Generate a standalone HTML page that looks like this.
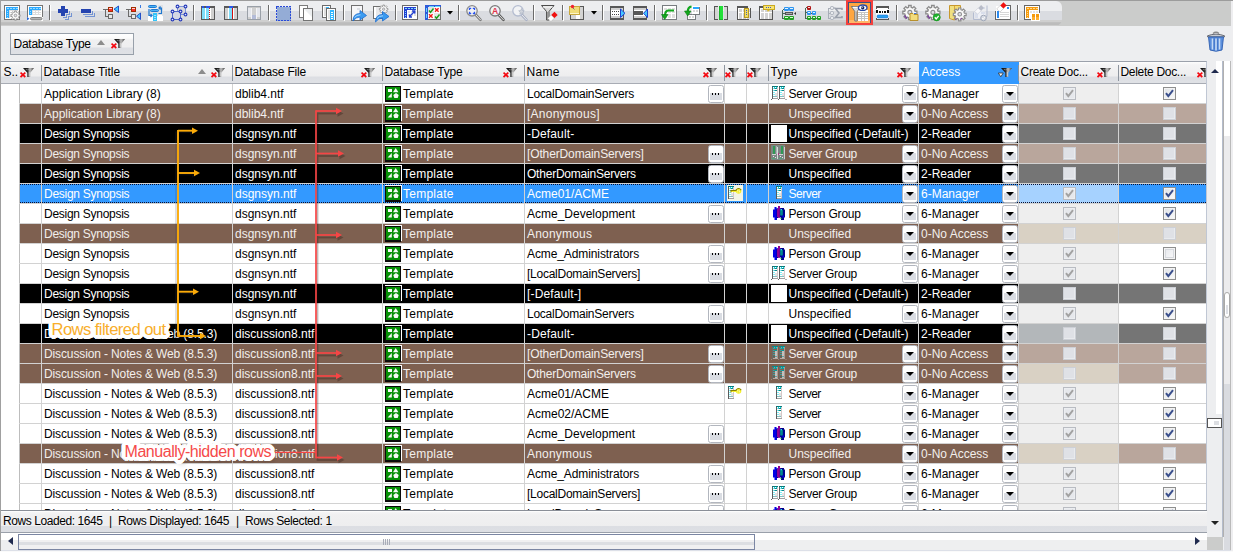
<!DOCTYPE html>
<html lang="en"><head><meta charset="utf-8"><title>ACL grid</title>
<style>
html,body{margin:0;padding:0}
body{width:1233px;height:552px;overflow:hidden;position:relative;background:#edeef0;font-family:"Liberation Sans",sans-serif;font-size:12px;color:#000}
div,span,svg,i,b{position:absolute;box-sizing:border-box;display:block}
.topline{left:0;top:0;width:1233px;height:1px;background:#9c9c9c}
.leftline{left:0;top:0;width:1px;height:552px;background:#a0a0a0}
.tbbg{left:1px;top:1px;width:1230px;height:25px;background:#cbcccb}
.tb{left:1px;top:1px;width:1061px;height:25px;border-radius:0 6px 7px 0;background:linear-gradient(#edeef0 0,#edeef0 10px,#dadce1 10px,#dadce1 19px,#cfcfcf 19px,#cfcfcf 21px,#c4c4c4 21px,#bcbcbc 22px,#bcbcbc 24px,#cdcdcd 24px,#cdcdcd 25px)}
.tb .sep{top:4px;width:2px;height:16px;border-left:1px solid #6d6d6d;border-right:1px solid #fff}
.tb svg{top:4px;width:16px;height:16px}
.tb .arr{top:11px;width:0;height:0;border:3px solid transparent;border-top:3px solid #000;border-bottom:0}
.tb .hot{left:845px;top:0;width:27px;height:24px;border:2px solid #e8413c;background:#f5a54a}
.grp{left:10px;top:33px;width:124px;height:22px;border:1px solid #98a0aa;background:linear-gradient(#fff 0,#fbfbfb 4px,#f0f0f1 6px,#efeff0 13px,#dddfe4 14px,#dfe1e5 100%)}
.grp .gt{left:2.500px;top:1px;line-height:19px;white-space:nowrap;letter-spacing:-.25px}
.sortup{left:86px;top:6px;width:0;height:0;border:4.5px solid transparent;border-bottom:5px solid #8c8c8c;border-top:0}
.flt{width:14px;height:10px}
.trash{left:1207px;top:31px}
.grid{left:1px;top:61px;width:1206px;height:450px;overflow:hidden;background:#fff;border-top:1px solid #9ba1ab;border-right:1px solid #c0c7d4}
.grid>*{margin-left:-1px}
.hdr{left:0;top:0;width:1207px;height:22px;background:linear-gradient(#fdfdfd 0,#f3f3f4 3px,#eeeeef 14px,#dcdee3 15px,#dfe1e5 20px);border-bottom:1px solid #a8acb4}
.hc{top:0;height:21px}
.hc:before{content:"";position:absolute;left:0;top:3px;width:1px;height:16px;background:#8d949e}
.hc:first-child:before{display:none}
.hc .ht{top:0;line-height:20px;white-space:nowrap;margin-left:-.5px}
.hsel{background:#3399ff;color:#fff;height:23px;top:-1px;left:919px !important;width:100px !important}
.hsel .ht{top:1px !important}
.hsel .flt{margin-top:1px}
.hsel:before{display:none}
.row{left:0;width:1207px;height:20px;border-bottom:1px solid #d2d2d2}
.row:before{content:"";position:absolute;left:1px;top:0;width:18px;height:20px;background:#fff}
.c{top:0;height:19px;border-left:1px solid #d2d2d2;overflow:hidden;white-space:nowrap}
.c .t{left:2px;top:1px;line-height:19px}
.rw{background:#fff}
.rb{background:#7e6050;color:#f3efec}
.rk{background:#000;color:#fff}
.rs{background:#3399ff;color:#fff}
.ic{top:1px}
.wb{left:3px;top:1px;width:16px;height:17px;background:#fff}
.btn{top:1px;right:0;width:16px;height:18px;border:1px solid #b2b6be;border-radius:2.500px;background:linear-gradient(#fff 0,#fff 7px,#d9dce2 7px,#d9dce2 14px,#fff 14px);box-shadow:inset 0 0 0 1px #fff}
.dd b{left:3px;top:6px;width:0;height:0;border:4px solid transparent;border-top:4px solid #000;border-bottom:0}
.el i{top:7px;width:1px;height:1.500px;background:#000}
.el i:nth-child(1){left:3px}.el i:nth-child(2){left:6px}.el i:nth-child(3){left:9px}
.cb{width:13px;height:13px;border:1px solid #8e8f8f;background:#fff}
.cb svg{left:0;top:0}
.cbc{background:linear-gradient(135deg,#dfe2e6,#fafbfb);box-shadow:inset 0 0 0 1px #f4f4f4}
.cbd{border-color:#b9bcc2;background:#e6e8ec;box-shadow:inset 0 0 0 1px #eceef1}
.cbu{border-color:#cdd0d6;background:#dfe1e6;box-shadow:inset -1px -1px 0 0 #e9ebee}
.cbw{border-color:#8e8f8f;background:linear-gradient(135deg,#e4e6ea,#fbfbfc);box-shadow:inset 0 0 0 1px #f4f4f4,inset 0 0 0 2px #d6d9de}
.status{left:1px;top:511px;width:1206px;height:22px;background:linear-gradient(#f5f5f6 0,#f0f0f1 3px,#eeeeef 14px,#dcdee3 14px,#dddfe4 20px);border-top:1px solid #fcfcfc;border-bottom:1px solid #9aa0aa}
.status span{top:0;line-height:19px;white-space:nowrap;letter-spacing:-.42px}
.hs{left:1px;top:533px;width:1206px;height:17px;background:linear-gradient(#fff 0,#fff 7px,#eeeff0 7px)}
.lbl{white-space:nowrap;line-height:19px}
.lblsh{white-space:nowrap;line-height:19px;color:transparent;text-shadow:2px 2.500px 5px rgba(0,0,0,.45),0 0 7px rgba(0,0,0,.25)}
.rs .c:after,.rs .foc{content:"";position:absolute;left:0;right:0;top:0;height:1px;background:repeating-linear-gradient(90deg,#0a1030 0,#0a1030 1px,transparent 1px,transparent 2px)}
.rs .c:before{content:"";position:absolute;left:0;right:0;bottom:0;height:1px;background:repeating-linear-gradient(90deg,#0a1030 0,#0a1030 1px,transparent 1px,transparent 2px)}
.vs{left:1207px;top:61px;width:17px;height:476px;background:linear-gradient(90deg,#edeef0 0,#edeef0 15px,#b4bccc 15px,#b4bccc 16px,#b0b0b0 16px)}
.vs .ws{left:9px;top:0;width:6px;height:353px;background:#fff}
.vs .up{left:3.500px;top:7.500px;width:0;height:0;border:4px solid transparent;border-bottom:4.500px solid #1f2a4e;border-top:0}
.vs .dn{left:3.500px;top:460px;width:0;height:0;border:4px solid transparent;border-top:4.500px solid #222;border-bottom:0}
.vs .th{left:0;top:357px;width:15px;height:10px;border:1px solid #555;background:#fff}
.vs .th i{left:6px;top:2px;width:5px;height:4px;background:#dcdee2}
.corner{left:1207px;top:537px;width:16px;height:13px;background:#cbcccb}
.os{left:1224px;top:61px;width:7px;height:489px;background:linear-gradient(#fff 0,#fff 75px,#ebebed 75px,#ebebed 323px,#d9dbe0 323px);border-right:1px solid #bababa}
.os .th{left:0;top:231px;width:6px;height:26px;border:1px solid #a8a8a8;border-radius:3px;background:#fff}
.os .th i{left:1px;top:12px;width:2px;height:9px;background:#dcdee4}
.redge{left:1231px;top:1px;width:2px;height:551px;background:#eeeef0}
.botline{left:1px;top:550px;width:1230px;height:1px;background:#dde0e8}
.botline2{left:0;top:551px;width:1233px;height:1px;background:#fafafa}
.hs .la{left:7px;top:4px;width:0;height:0;border:4.5px solid transparent;border-right:5px solid #1f2a4e;border-left:0}
.hs .ra{left:1194px;top:4px;width:0;height:0;border:4.5px solid transparent;border-left:5px solid #1f2a4e;border-right:0}
.hs .th{left:17px;top:1px;width:737px;height:16px;border:1px solid #7b86a3;background:linear-gradient(#fff 0,#fff 5px,#f0f0f1 5px,#f0f0f1 7px,#dcdee2 7px,#dcdee2 10px,#f0f0f1 10px)}
.hs .th i{top:4px;width:1px;height:6px;background:#a8acb8}
.gridbot{left:1px;top:510px;width:1206px;height:1px;background:#8a8f98}
.kbg{left:2px;top:1px;width:16px;height:16px;background:#f3f5e6}
.wb{left:2px !important}
.c0{border-left-color:#bdbdbd}
</style></head>
<body>
<svg width="0" height="0" style="position:absolute"><defs><linearGradient id="fg" x1="0" y1="0" x2="1" y2="0"><stop offset="0" stop-color="#0c0c0c"/><stop offset=".42" stop-color="#2a2a2a"/><stop offset=".62" stop-color="#c4c4c4"/><stop offset=".8" stop-color="#8a8a8a"/><stop offset="1" stop-color="#3c3c3c"/></linearGradient>
<symbol id="flt" viewBox="0 0 14 10"><path d="M0.500 4.600 L5.300 9 M5.300 4.600 L0.500 9" stroke="#f40810" stroke-width="1.700" fill="none"/><path d="M3 0 L14 0 L10.300 4.800 L10.300 9 L7.300 9 L7.300 4.800 Z" fill="url(#fg)"/><path d="M6.200 1.300 L7 2.200 M7.600 1 L8.300 1.800" stroke="#fff" stroke-width=".700" opacity=".8"/><path d="M9.300 4 L9.300 8" stroke="#e8e8e8" stroke-width=".800" opacity=".7"/></symbol>
<symbol id="flta" viewBox="0 0 14 10"><path d="M0.300 5 L5.300 5 L2.800 8.800 Z" fill="#f4f7fb" stroke="#333" stroke-width=".800"/><path d="M3 0 L14 0 L10.300 4.800 L10.300 9 L7.300 9 L7.300 4.800 Z" fill="url(#fg)"/><path d="M6.200 1.300 L7 2.200 M7.600 1 L8.300 1.800" stroke="#fff" stroke-width=".700" opacity=".8"/><path d="M9.300 4 L9.300 8" stroke="#e8e8e8" stroke-width=".800" opacity=".7"/></symbol>
<symbol id="tpl" viewBox="0 0 17 17"><g shape-rendering="crispEdges"><rect x="0" y="0" width="17" height="1" fill="#fff"/><rect x="16" y="0" width="1" height="16" fill="#fff"/><rect x="0" y="1" width="16" height="16" fill="#0a0a0a"/><rect x="1" y="2" width="14" height="13" fill="#069006"/><rect x="3" y="4" width="4" height="3" fill="#f6faf6"/></g><path d="M2.600 12.600 L6.800 8 L6.800 12.600Z" fill="#f6faf6"/><path d="M8 7.200 L10.700 3 L13.400 7.200Z" fill="#f6faf6"/><path d="M11 8.100 L13.700 10 L12.700 13 L9.300 13 L8.300 10Z" fill="#f6faf6"/></symbol>
<symbol id="sg" viewBox="0 0 16 16"><rect x="1" y="1" width="6" height="13" fill="#fff"/><rect x="1" y="1" width="1" height="13" fill="#5c5c5c"/><rect x="1" y="1" width="6" height="1" fill="#0a7878"/><rect x="6" y="2" width="1" height="11" fill="#d4c8c8"/><rect x="2" y="13" width="5" height="1" fill="#a0a0a0"/><rect x="2.5" y="3" width="1" height="1" fill="#00e0ee"/><rect x="2.5" y="5" width="1" height="1" fill="#00e0ee"/><rect x="2.5" y="7" width="1" height="1" fill="#00e0ee"/><rect x="2.5" y="9" width="1" height="1" fill="#00e0ee"/><rect x="3.5" y="3" width="2.5" height="1" fill="#0a8a8a"/><rect x="3.5" y="5" width="2.5" height="1" fill="#0a8a8a"/><rect x="3" y="2" width="1" height="1" fill="#00e0ee"/><rect x="5" y="2" width="1" height="1" fill="#00e0ee"/><rect x="2.5" y="11" width="1" height="1" fill="#0a8080"/><rect x="4.5" y="11" width="1" height="1" fill="#0a8080"/><rect x="4.5" y="8" width="1" height="3" fill="#c8c8c8"/><rect x="0" y="14" width="1" height="1" fill="#666"/><rect x="8" y="1" width="6" height="13" fill="#fff"/><rect x="8" y="1" width="1" height="13" fill="#5c5c5c"/><rect x="8" y="1" width="6" height="1" fill="#0a7878"/><rect x="13" y="2" width="1" height="11" fill="#d4c8c8"/><rect x="9" y="13" width="5" height="1" fill="#a0a0a0"/><rect x="9.5" y="3" width="1" height="1" fill="#00e0ee"/><rect x="9.5" y="5" width="1" height="1" fill="#00e0ee"/><rect x="9.5" y="7" width="1" height="1" fill="#00e0ee"/><rect x="9.5" y="9" width="1" height="1" fill="#00e0ee"/><rect x="10.5" y="3" width="2.5" height="1" fill="#0a8a8a"/><rect x="10.5" y="5" width="2.5" height="1" fill="#0a8a8a"/><rect x="10" y="2" width="1" height="1" fill="#00e0ee"/><rect x="12" y="2" width="1" height="1" fill="#00e0ee"/><rect x="9.5" y="11" width="1" height="1" fill="#0a8080"/><rect x="11.5" y="11" width="1" height="1" fill="#0a8080"/><rect x="11.5" y="8" width="1" height="3" fill="#c8c8c8"/><rect x="7" y="14" width="1" height="1" fill="#666"/><rect x="14.5" y="14" width="1" height="1" fill="#666"/></symbol>
<symbol id="sgd" viewBox="0 0 16 16"><rect x="0" y="0" width="14" height="15" fill="#7c8684"/><rect x="2" y="1" width="2" height="8" fill="#2f9a55"/><rect x="10" y="1" width="2" height="8" fill="#2f9a55"/><rect x="5" y="1" width="1" height="8" fill="#a8b4b4"/><rect x="6" y="2" width="1" height="12" fill="#d8dcdc"/><rect x="13" y="2" width="1" height="12" fill="#c8d0d0"/><rect x="1" y="9" width="4" height="1" fill="#d0d4d4"/><rect x="8" y="9" width="4" height="1" fill="#d0d4d4"/><rect x="2" y="11" width="1" height="1" fill="#e8ecec"/><rect x="4" y="12" width="1" height="1" fill="#e8ecec"/><rect x="9" y="11" width="1" height="1" fill="#e8ecec"/><rect x="11" y="12" width="1" height="1" fill="#e8ecec"/><rect x="1" y="13" width="3" height="1" fill="#50a878"/><rect x="8" y="13" width="3" height="1" fill="#50a878"/><rect x="7" y="8" width="1" height="2" fill="#b03080"/></symbol>
<symbol id="sgt" viewBox="0 0 16 16"><rect x="1" y="1" width="1" height="13" fill="#6a6a6a"/><rect x="1" y="1" width="6" height="1" fill="#0a8a8a"/><rect x="6" y="2" width="1" height="11" fill="#a89890"/><rect x="2" y="13" width="5" height="1" fill="#b0aaa6"/><rect x="4" y="6" width="2" height="7" fill="#c4c0be"/><rect x="2.5" y="3" width="1" height="1" fill="#00e0ee"/><rect x="2.5" y="5" width="1" height="1" fill="#00e0ee"/><rect x="2.5" y="7" width="1" height="1" fill="#00e0ee"/><rect x="2.5" y="9" width="1" height="1" fill="#00e0ee"/><rect x="3.5" y="3" width="2.5" height="1" fill="#0a9a9a"/><rect x="3.5" y="5" width="2.5" height="1" fill="#0a9a9a"/><rect x="3" y="2" width="1" height="1" fill="#00e0ee"/><rect x="5" y="2" width="1" height="1" fill="#00e0ee"/><rect x="2.5" y="11" width="1" height="1" fill="#0a8080"/><rect x="4.5" y="11" width="1" height="1" fill="#0a8080"/><rect x="0" y="14" width="1" height="1" fill="#9a8a80"/><rect x="8" y="1" width="1" height="13" fill="#6a6a6a"/><rect x="8" y="1" width="6" height="1" fill="#0a8a8a"/><rect x="13" y="2" width="1" height="11" fill="#a89890"/><rect x="9" y="13" width="5" height="1" fill="#b0aaa6"/><rect x="11" y="6" width="2" height="7" fill="#c4c0be"/><rect x="9.5" y="3" width="1" height="1" fill="#00e0ee"/><rect x="9.5" y="5" width="1" height="1" fill="#00e0ee"/><rect x="9.5" y="7" width="1" height="1" fill="#00e0ee"/><rect x="9.5" y="9" width="1" height="1" fill="#00e0ee"/><rect x="10.5" y="3" width="2.5" height="1" fill="#0a9a9a"/><rect x="10.5" y="5" width="2.5" height="1" fill="#0a9a9a"/><rect x="10" y="2" width="1" height="1" fill="#00e0ee"/><rect x="12" y="2" width="1" height="1" fill="#00e0ee"/><rect x="9.5" y="11" width="1" height="1" fill="#0a8080"/><rect x="11.5" y="11" width="1" height="1" fill="#0a8080"/><rect x="7" y="14" width="1" height="1" fill="#9a8a80"/><rect x="14.5" y="14" width="1" height="1" fill="#9a8a80"/></symbol>
<symbol id="sv" viewBox="0 0 16 16"><rect x="5" y="1" width="6" height="13" fill="#fff"/><rect x="5" y="1" width="1" height="13" fill="#5c5c5c"/><rect x="5" y="1" width="6" height="1" fill="#0a7878"/><rect x="10" y="2" width="1" height="11" fill="#d4c8c8"/><rect x="6" y="13" width="5" height="1" fill="#a0a0a0"/><rect x="6.5" y="3" width="1" height="1" fill="#00e0ee"/><rect x="6.5" y="5" width="1" height="1" fill="#00e0ee"/><rect x="6.5" y="7" width="1" height="1" fill="#00e0ee"/><rect x="6.5" y="9" width="1" height="1" fill="#00e0ee"/><rect x="7.5" y="3" width="2.5" height="1" fill="#0a8a8a"/><rect x="7.5" y="5" width="2.5" height="1" fill="#0a8a8a"/><rect x="7" y="2" width="1" height="1" fill="#00e0ee"/><rect x="9" y="2" width="1" height="1" fill="#00e0ee"/><rect x="6.5" y="11" width="1" height="1" fill="#0a8080"/><rect x="8.5" y="11" width="1" height="1" fill="#0a8080"/><rect x="8.5" y="8" width="1" height="3" fill="#c8c8c8"/></symbol>
<symbol id="pg" viewBox="0 0 16 16"><path d="M3.500 2h2v1.500h1.500v9h-1v2.500h-2.500v-2.500h-1.500v-8h1.500z" fill="#0000e6"/><path d="M5.500 3.500h1.800v9.500h-1.800z" fill="#00008c"/><path d="M7 1h2v2h1v9h-1.200v1h-1.600v-1h-1.200v-8h1z" fill="#920092"/><path d="M9.500 3h3.500v1.500h1v8h-1v2.500h-3v-2.500h-1.200v-8h.7z" fill="#00008c"/><path d="M9.200 5h2.600v5.500h-2.600z" fill="#008c8c"/><rect x="9.5" y="4" width="1.5" height="1.2" fill="#20e8f0"/><rect x="11.5" y="10.5" width="1.5" height="2" fill="#0000e6"/><rect x="9.5" y="13" width="1" height="1" fill="#10d020"/></symbol>
<symbol id="key" viewBox="0 0 17 15"><rect x="1" y="1" width="6" height="13" fill="#fff"/><rect x="1" y="1" width="1" height="13" fill="#5c5c5c"/><rect x="1" y="1" width="6" height="1" fill="#0a7878"/><rect x="6" y="2" width="1" height="11" fill="#d4c8c8"/><rect x="2" y="13" width="5" height="1" fill="#a0a0a0"/><rect x="2.5" y="3" width="1" height="1" fill="#00e0ee"/><rect x="2.5" y="5" width="1" height="1" fill="#00e0ee"/><rect x="2.5" y="7" width="1" height="1" fill="#00e0ee"/><rect x="2.5" y="9" width="1" height="1" fill="#00e0ee"/><rect x="3.5" y="3" width="2.5" height="1" fill="#0a8a8a"/><rect x="3.5" y="5" width="2.5" height="1" fill="#0a8a8a"/><rect x="3" y="2" width="1" height="1" fill="#00e0ee"/><rect x="5" y="2" width="1" height="1" fill="#00e0ee"/><rect x="2.5" y="11" width="1" height="1" fill="#0a8080"/><rect x="4.5" y="11" width="1" height="1" fill="#0a8080"/><rect x="4.5" y="8" width="1" height="3" fill="#c8c8c8"/><circle cx="11.600" cy="6" r="2.700" fill="#f4f030"/><path d="M9 5.200 Q11.600 1.800 14.200 5.200" fill="none" stroke="#8a8000" stroke-width="1.100"/><path d="M3.500 5.500h6" stroke="#8a8000" stroke-width="1.200"/><path d="M4 6.500h5.500" stroke="#f4f030" stroke-width="1"/><rect x="3.5" y="6" width="1" height="1.5" fill="#8a8000"/><circle cx="10.800" cy="5.200" r=".500" fill="#fff"/><circle cx="12.400" cy="6.800" r=".500" fill="#fff"/><circle cx="12.400" cy="5" r=".400" fill="#fff"/><circle cx="10.800" cy="7" r=".400" fill="#fff"/></symbol>
<symbol id="trash" viewBox="0 0 18 21"><path d="M6 2.500 Q9 0 12 2.500" fill="none" stroke="#8a8a8a" stroke-width="1.400"/><path d="M0.500 4.800 Q9 1.500 17.500 4.800 L17.500 5.800 L0.500 5.800Z" fill="#c8ccd2" stroke="#5a5e68" stroke-width=".900"/><path d="M1.500 6 L3 19 Q9 21.500 15 19 L16.500 6Z" fill="#5a8edc" stroke="#2f5fb0" stroke-width=".900"/><path d="M5.500 7.500v11M9 7.500v12M12.500 7.500v11" stroke="#c4daf6" stroke-width="1.600"/><path d="M7.200 7.500v11M10.700 7.500v11" stroke="#3f73c8" stroke-width="1"/></symbol>
</defs></svg>
<div class="topline"></div><div class="tbbg"></div>
<div class="tb"></div>
<svg class="tbi" width="1233" height="27" viewBox="0 0 1233 27" style="left:0;top:0">
<g transform="translate(4,5)" shape-rendering="crispEdges"><rect x="0" y="0" width="16" height="15" fill="#747474"/><rect x="1" y="1" width="14" height="13" fill="#fff"/><rect x="2" y="2" width="12" height="3" fill="#29a9ff"/><rect x="2" y="2" width="3" height="11" fill="#29a9ff"/><rect x="3" y="3" width="2" height="1" fill="#9adcff"/><rect x="6" y="3" width="2" height="1" fill="#9adcff"/><rect x="9" y="3" width="2" height="1" fill="#9adcff"/><rect x="12" y="3" width="2" height="1" fill="#9adcff"/><rect x="3" y="6" width="1" height="1" fill="#9adcff"/><rect x="3" y="8" width="1" height="1" fill="#9adcff"/><rect x="3" y="10" width="1" height="1" fill="#9adcff"/><rect x="3" y="12" width="1" height="1" fill="#9adcff"/><rect x="5" y="5" width="9" height="8" fill="#dcdcdc"/><rect x="6" y="6" width="2" height="1" fill="#fff"/><rect x="6" y="8" width="2" height="1" fill="#fff"/><rect x="6" y="10" width="2" height="1" fill="#fff"/><rect x="6" y="12" width="2" height="1" fill="#fff"/><rect x="9" y="6" width="2" height="1" fill="#fff"/><rect x="9" y="8" width="2" height="1" fill="#fff"/><rect x="9" y="10" width="2" height="1" fill="#fff"/><rect x="9" y="12" width="2" height="1" fill="#fff"/><rect x="12" y="6" width="2" height="1" fill="#fff"/><rect x="12" y="8" width="2" height="1" fill="#fff"/><rect x="12" y="10" width="2" height="1" fill="#fff"/><rect x="12" y="12" width="2" height="1" fill="#fff"/><g transform="translate(7,6) scale(0.56)" shape-rendering="auto"><path d="M6.500 0h3v2.200l1.700.700 1.600-1.600 2.100 2.100-1.600 1.600.700 1.700h2.200v3h-2.200l-.700 1.700 1.600 1.600-2.100 2.100-1.600-1.600-1.700.700v2.200h-3v-2.200l-1.700-.700-1.600 1.600-2.100-2.100 1.600-1.600-.700-1.700h-2.200v-3h2.200l.700-1.700-1.600-1.600 2.100-2.100 1.600 1.600 1.700-.700z" fill="#f8f8f8" stroke="#8c8c8c" stroke-width="1.500"/><circle cx="8" cy="8" r="2.300" fill="#dfe0e6" stroke="#8c8c8c" stroke-width="1.300"/></g></g>
<g transform="translate(27,5)" shape-rendering="crispEdges"><rect x="0" y="0" width="16" height="12" fill="#747474"/><rect x="1" y="1" width="14" height="10" fill="#fff"/><rect x="2" y="2" width="12" height="3" fill="#29a9ff"/><rect x="2" y="2" width="3" height="8" fill="#29a9ff"/><rect x="3" y="3" width="2" height="1" fill="#9adcff"/><rect x="6" y="3" width="2" height="1" fill="#9adcff"/><rect x="9" y="3" width="2" height="1" fill="#9adcff"/><rect x="12" y="3" width="2" height="1" fill="#9adcff"/><rect x="3" y="6" width="1" height="1" fill="#9adcff"/><rect x="3" y="8" width="1" height="1" fill="#9adcff"/><rect x="5" y="5" width="9" height="5" fill="#dcdcdc"/><rect x="6" y="6" width="2" height="1" fill="#fff"/><rect x="6" y="8" width="2" height="1" fill="#fff"/><rect x="9" y="6" width="2" height="1" fill="#fff"/><rect x="9" y="8" width="2" height="1" fill="#fff"/><rect x="12" y="6" width="2" height="1" fill="#fff"/><rect x="12" y="8" width="2" height="1" fill="#fff"/><rect x="0" y="11" width="16" height="5" fill="#fff"/><rect x="0" y="11" width="1" height="1" fill="#747474"/><rect x="15" y="11" width="1" height="1" fill="#747474"/><rect x="3.500" y="12.500" width="11.500" height="2.400" rx="1.200" fill="#b4b4b4" stroke="#7a7a7a" stroke-width=".900" shape-rendering="auto"/><path d="M0 11.800l2.400 1.900-2.400 1.900z" fill="#2a6ad8" shape-rendering="auto"/></g>
<g transform="translate(49,5)" shape-rendering="crispEdges"><rect x="0" y="0" width="1" height="15" fill="#6b6b6b"/><rect x="1" y="0" width="1" height="16" fill="#fff"/></g>
<g transform="translate(58,6)" shape-rendering="crispEdges"><rect x="3" y="0" width="4" height="10" fill="#2443b0"/><rect x="0" y="3" width="10" height="4" fill="#2443b0"/><path d="M11.500 5V8.500H8.500V11.500H5M13.500 7V10.500H10.500V13.500H7" fill="none" stroke="#7393d3" stroke-width="1"/></g>
<g transform="translate(81,6)" shape-rendering="crispEdges"><rect x="0" y="3" width="10" height="4" fill="#2443b0"/><path d="M11.500 5V8.500H2M13.500 7V10.500H4" fill="none" stroke="#7393d3" stroke-width="1"/></g>
<g transform="translate(103,5)" shape-rendering="crispEdges"><path d="M0 4.500h5M2.500 4.500v7h3" fill="none" stroke="#6a6a6a" stroke-width="1"/><rect x="5" y="2" width="5" height="5" fill="#a22c00"/><rect x="6" y="3" width="3" height="3" fill="#ff2a2a"/><rect x="6" y="3" width="3" height="1" fill="#ffd0d0"/><rect x="5" y="9" width="5" height="5" fill="#6a6a6a"/><rect x="6" y="10" width="3" height="3" fill="#e8e8e8"/><path d="M15.500 1v6.500l-4.500-3.300z" fill="#45c8ff" stroke="#2450c8" shape-rendering="auto"/></g>
<g transform="translate(126,5)" shape-rendering="crispEdges"><path d="M0 4.500h5M2.500 4.500v7h3" fill="none" stroke="#6a6a6a" stroke-width="1"/><rect x="5" y="2" width="5" height="5" fill="#a22c00"/><rect x="6" y="3" width="3" height="3" fill="#ff2a2a"/><rect x="6" y="3" width="3" height="1" fill="#ffd0d0"/><rect x="5" y="9" width="5" height="5" fill="#6a6a6a"/><rect x="6" y="10" width="3" height="3" fill="#e8e8e8"/><path d="M14.500 8v6.500l-4-3.300z" fill="#45c8ff" stroke="#2450c8" shape-rendering="auto"/><rect x="14" y="0" width="1" height="3" fill="#3a7ae0"/></g>
<g transform="translate(148,5)" shape-rendering="crispEdges"><rect x="10" y="0" width="5" height="16" fill="#e0e2e6"/><rect x="0" y="11" width="15" height="5" fill="#fff"/><rect x="5" y="8" width="4" height="8" fill="#35c4f8"/><g shape-rendering="auto"><rect x="0.500" y="0.500" width="8" height="2" rx="1" fill="#4ab4f4" stroke="#1f78d0"/><rect x="2.500" y="4.500" width="8" height="2" rx="1" fill="#4ab4f4" stroke="#1f78d0"/><path d="M1 4v6.500h2.500M2.500 9l1.500 1.500-1.500 1.500" fill="none" stroke="#1f78d0" stroke-width="1.200"/><path d="M10.500 8.500h3v-5.500h-2M12.500 1.500l-1.500 1.500 1.500 1.500" fill="none" stroke="#1f78d0" stroke-width="1.200"/></g><rect x="10" y="10" width="4" height="1" fill="#fff"/><rect x="10" y="12" width="4" height="1" fill="#fff"/><rect x="10" y="14" width="4" height="1" fill="#fff"/><rect x="6" y="10" width="2" height="1" fill="#9fe4ff"/><rect x="6" y="12" width="2" height="1" fill="#9fe4ff"/><rect x="6" y="14" width="2" height="1" fill="#9fe4ff"/></g>
<g transform="translate(171,5)" shape-rendering="crispEdges"><g shape-rendering="auto"><rect x="6.500" y="1.500" width="8" height="8" fill="#d8d8dc" stroke="#7f95d8"/><rect x="1.500" y="6.500" width="8" height="8" fill="#d3d6e4" stroke="#5068c8"/><circle cx="6.5" cy="1.5" r="1.400" fill="#dfe6ff" stroke="#2438b8" stroke-width="1.100"/><circle cx="14.5" cy="1.5" r="1.400" fill="#dfe6ff" stroke="#2438b8" stroke-width="1.100"/><circle cx="14.5" cy="9.5" r="1.400" fill="#dfe6ff" stroke="#2438b8" stroke-width="1.100"/><circle cx="1.5" cy="6.5" r="1.400" fill="#dfe6ff" stroke="#2438b8" stroke-width="1.100"/><circle cx="9.5" cy="6.5" r="1.400" fill="#dfe6ff" stroke="#2438b8" stroke-width="1.100"/><circle cx="1.5" cy="14.5" r="1.400" fill="#dfe6ff" stroke="#2438b8" stroke-width="1.100"/><circle cx="9.5" cy="14.5" r="1.400" fill="#dfe6ff" stroke="#2438b8" stroke-width="1.100"/></g></g>
<g transform="translate(193,5)" shape-rendering="crispEdges"><rect x="0" y="0" width="1" height="15" fill="#6b6b6b"/><rect x="1" y="0" width="1" height="16" fill="#fff"/></g>
<g transform="translate(201,6)" shape-rendering="crispEdges"><rect x="0" y="0" width="14" height="14" fill="#585858"/><rect x="1" y="2" width="12" height="11" fill="#fff"/><rect x="1" y="0" width="2" height="2" fill="#2b55e8"/><rect x="5" y="0" width="4" height="2" fill="#2b55e8"/><rect x="1" y="2" width="3" height="11" fill="#7fdcf8"/><rect x="5" y="2" width="3" height="11" fill="#7fdcf8"/><rect x="8" y="2" width="1" height="1" fill="#d01010"/><rect x="8" y="4" width="1" height="1" fill="#d01010"/><rect x="8" y="6" width="1" height="1" fill="#d01010"/><rect x="8" y="8" width="1" height="1" fill="#d01010"/><rect x="8" y="10" width="1" height="1" fill="#d01010"/><rect x="8" y="12" width="1" height="1" fill="#d01010"/><rect x="10" y="2" width="3" height="11" fill="#d0d0d0"/></g>
<g transform="translate(224,6)" shape-rendering="crispEdges"><rect x="0" y="0" width="14" height="14" fill="#585858"/><rect x="1" y="2" width="12" height="11" fill="#fff"/><rect x="5" y="0" width="4" height="2" fill="#2b55e8"/><rect x="1" y="2" width="3" height="11" fill="#d0d0d0"/><rect x="5" y="2" width="3" height="11" fill="#7fdcf8"/><rect x="8" y="2" width="1" height="11" fill="#d01010"/><rect x="10" y="2" width="3" height="11" fill="#d0d0d0"/></g>
<g transform="translate(247,6)" shape-rendering="crispEdges"><rect x="0" y="0" width="14" height="14" fill="#9aa0a8"/><rect x="1" y="1" width="12" height="12" fill="#e4e6ec"/><rect x="1" y="1" width="12" height="1" fill="#c8c8c8"/><rect x="4" y="2" width="1" height="11" fill="#f4f4f6"/><rect x="9" y="2" width="1" height="11" fill="#f4f4f6"/><rect x="5" y="2" width="4" height="7" fill="#d0d0d0"/><rect x="5" y="9" width="4" height="4" fill="#b4bcd8"/><rect x="1" y="11" width="3" height="2" fill="#d0d0d0"/><rect x="10" y="11" width="3" height="2" fill="#d0d0d0"/></g>
<g transform="translate(268,5)" shape-rendering="crispEdges"><rect x="0" y="0" width="1" height="15" fill="#6b6b6b"/><rect x="1" y="0" width="1" height="16" fill="#fff"/></g>
<g transform="translate(276,6)" shape-rendering="crispEdges"><rect x="0.500" y="0.500" width="14" height="14" fill="#94acd6" stroke="#2a4ad8" stroke-width="1" stroke-dasharray="2 1" shape-rendering="crispEdges"/></g>
<g transform="translate(299,5)" shape-rendering="crispEdges"><rect x="0" y="0" width="9" height="13" fill="#7c7c7c"/><rect x="1" y="1" width="7" height="11" fill="#fff"/><rect x="4" y="3" width="10" height="13" fill="#747474"/><rect x="5" y="4" width="8" height="11" fill="#fff"/><path d="M5 4h8v8z" fill="#eceef0" shape-rendering="auto"/></g>
<g transform="translate(322,5)" shape-rendering="crispEdges"><rect x="0" y="0" width="9" height="13" fill="#6c6c6c"/><rect x="1" y="1" width="7" height="11" fill="#fff"/><rect x="2" y="2" width="2" height="9" fill="#e0e0e0"/><rect x="4" y="2" width="3" height="2" fill="#35b8ff"/><rect x="4" y="3" width="10" height="13" fill="#6c6c6c"/><rect x="5" y="4" width="8" height="11" fill="#fff"/><rect x="6" y="5" width="2" height="9" fill="#e4e4e4"/><rect x="8" y="5" width="4" height="10" fill="#35b8ff"/><rect x="9" y="7" width="2" height="1" fill="#fff"/><rect x="9" y="9" width="2" height="1" fill="#fff"/><rect x="9" y="11" width="2" height="1" fill="#fff"/><rect x="9" y="13" width="2" height="1" fill="#fff"/></g>
<g transform="translate(343,5)" shape-rendering="crispEdges"><rect x="0" y="0" width="1" height="15" fill="#6b6b6b"/><rect x="1" y="0" width="1" height="16" fill="#fff"/></g>
<g transform="translate(351,5)" shape-rendering="crispEdges"><rect x="0" y="0" width="12" height="16" fill="#707070"/><rect x="1" y="1" width="10" height="14" fill="#f6f6f8"/><rect x="6" y="3" width="3" height="2" fill="#dcdfe4"/><g transform="translate(1,0)"><path d="M1 16 Q1 8.500 8 8.500 V5.500 L14.500 10.500 L8 15 V12 Q4 12 1 16z" fill="#3a9af0" stroke="#1c6cd0" stroke-width=".800" shape-rendering="auto"/><path d="M2.500 12.500 Q4.500 9.800 8.500 9.800" fill="none" stroke="#a8d8ff" stroke-width="1" shape-rendering="auto"/></g></g>
<g transform="translate(373,5)" shape-rendering="crispEdges"><rect x="0" y="1" width="10" height="13" fill="#707070"/><rect x="1" y="2" width="8" height="11" fill="#fff"/><rect x="3" y="2" width="6" height="11" fill="#e8e8ea"/><g transform="translate(6.5,0) scale(0.52)" shape-rendering="auto"><path d="M6.500 0h3v2.200l1.700.700 1.600-1.600 2.100 2.100-1.600 1.600.700 1.700h2.200v3h-2.200l-.700 1.700 1.600 1.600-2.100 2.100-1.600-1.600-1.700.700v2.200h-3v-2.200l-1.700-.700-1.600 1.600-2.100-2.100 1.600-1.600-.700-1.700h-2.200v-3h2.200l.700-1.700-1.600-1.600 2.100-2.100 1.600 1.600 1.700-.700z" fill="#f8f8f8" stroke="#8c8c8c" stroke-width="1.500"/><circle cx="8" cy="8" r="2.300" fill="#dfe0e6" stroke="#8c8c8c" stroke-width="1.300"/></g><g transform="translate(1.500,1)"><path d="M1 16 Q1 8.500 8 8.500 V5.500 L14.500 10.500 L8 15 V12 Q4 12 1 16z" fill="#3a9af0" stroke="#1c6cd0" stroke-width=".800" shape-rendering="auto"/><path d="M2.500 12.500 Q4.500 9.800 8.500 9.800" fill="none" stroke="#a8d8ff" stroke-width="1" shape-rendering="auto"/></g></g>
<g transform="translate(395,5)" shape-rendering="crispEdges"><rect x="0" y="0" width="1" height="15" fill="#6b6b6b"/><rect x="1" y="0" width="1" height="16" fill="#fff"/></g>
<g transform="translate(402,5)" shape-rendering="crispEdges"><rect x="0" y="0" width="16" height="15" fill="#6a6a6a"/><rect x="1" y="1" width="14" height="13" fill="#fff"/><rect x="2" y="2" width="12" height="3" fill="#2440d0"/><rect x="2" y="2" width="3" height="11" fill="#2440d0"/><rect x="6" y="6" width="2" height="2" fill="#e2e2e2"/><rect x="9" y="6" width="2" height="2" fill="#e2e2e2"/><rect x="12" y="6" width="2" height="2" fill="#e2e2e2"/><rect x="6" y="9" width="2" height="2" fill="#e2e2e2"/><rect x="9" y="9" width="2" height="2" fill="#e2e2e2"/><rect x="12" y="9" width="2" height="2" fill="#e2e2e2"/><rect x="3" y="3" width="2" height="1" fill="#7fdcf8"/><rect x="6" y="3" width="2" height="1" fill="#7fdcf8"/><rect x="9" y="3" width="2" height="1" fill="#7fdcf8"/><rect x="12" y="3" width="2" height="1" fill="#7fdcf8"/><rect x="3" y="6" width="1" height="1" fill="#7fdcf8"/><rect x="3" y="8" width="1" height="1" fill="#7fdcf8"/><rect x="3" y="10" width="1" height="1" fill="#7fdcf8"/><rect x="3" y="12" width="1" height="1" fill="#7fdcf8"/><path d="M7.500 11.500L12.500 6.500M7.500 9.500v2.500h2.500M10 6h2.800v2.800" fill="none" stroke="#2440d0" stroke-width="1.300" shape-rendering="auto"/></g>
<g transform="translate(425,5)" shape-rendering="crispEdges"><rect x="0" y="0" width="16" height="15" fill="#707070"/><rect x="0" y="0" width="16" height="2" fill="#2f5ad8"/><rect x="0" y="0" width="3" height="15" fill="#2f5ad8"/><rect x="3" y="2" width="12" height="12" fill="#fff"/><rect x="3" y="2" width="6" height="6" fill="#e4e4e6"/><rect x="9" y="8" width="6" height="6" fill="#e4e4e6"/><rect x="4" y="1" width="5" height="1" fill="#62d8ff"/><rect x="10" y="1" width="5" height="1" fill="#62d8ff"/><rect x="1" y="3" width="1" height="4" fill="#62d8ff"/><rect x="1" y="9" width="1" height="4" fill="#62d8ff"/><g transform="translate(4,3.300)"><path d="M0 2.200l1.500 1.800 3-3.800" fill="none" stroke="#18a018" stroke-width="1.400" shape-rendering="auto"/></g><g transform="translate(10,3.200)"><path d="M0 0l3.600 3.600M3.600 0l-3.600 3.600" fill="none" stroke="#f01818" stroke-width="1.400" shape-rendering="auto"/></g><g transform="translate(4,9.200)"><path d="M0 0l3.600 3.600M3.600 0l-3.600 3.600" fill="none" stroke="#f01818" stroke-width="1.400" shape-rendering="auto"/></g><g transform="translate(10,9.300)"><path d="M0 2.200l1.500 1.800 3-3.800" fill="none" stroke="#18a018" stroke-width="1.400" shape-rendering="auto"/></g></g>
<path d="M447 11h6l-3 3.500z" fill="#000"/>
<g transform="translate(458,5)" shape-rendering="crispEdges"><rect x="0" y="0" width="1" height="15" fill="#6b6b6b"/><rect x="1" y="0" width="1" height="16" fill="#fff"/></g>
<g transform="translate(466,5)"><g shape-rendering="auto"><path d="M9.500 9.500l5 5.300" stroke="#7a7a7a" stroke-width="2.600" stroke-linecap="round"/><path d="M9.500 9.500l5 5.300" stroke="#f4f4f4" stroke-width=".900" stroke-linecap="round"/><circle cx="6" cy="5.800" r="5.200" fill="#f2f3f5" stroke="#8a8a8a" stroke-width="1.300"/><path d="M3.500 5v-1.700h1.700M6.800 3.300h1.700v1.700M8.500 6.800v1.700h-1.700M5.200 8.500h-1.700v-1.700" fill="none" stroke="#2a55f0" stroke-width="1.300"/></g></g>
<g transform="translate(489,5)"><g shape-rendering="auto"><path d="M9.500 9.500l5 5.300" stroke="#5a5a5a" stroke-width="2.600" stroke-linecap="round"/><path d="M9.500 9.500l5 5.300" stroke="#f4f4f4" stroke-width=".900" stroke-linecap="round"/><circle cx="6" cy="5.800" r="5.200" fill="#f2f3f5" stroke="#7a7a7a" stroke-width="1.300"/><text x="6" y="8.800" font-family="Liberation Sans,sans-serif" font-weight="bold" font-size="8.500" text-anchor="middle" fill="#e0324a">A</text></g></g>
<g transform="translate(512,5)"><g shape-rendering="auto"><path d="M9.500 9.500l5 5.300" stroke="#a8b0c4" stroke-width="2.600" stroke-linecap="round"/><path d="M9.500 9.500l5 5.300" stroke="#f4f4f4" stroke-width=".900" stroke-linecap="round"/><circle cx="6" cy="5.800" r="5.200" fill="#f2f3f5" stroke="#b4bcd0" stroke-width="1.300"/><path d="M9.500 3.500l.8 2 2 .3-1.500 1.400.4 2-1.700-1-1.700 1 .4-2-1.500-1.400 2-.3z" fill="#d0d4dc" stroke="#a8b0c0" stroke-width=".600"/></g></g>
<g transform="translate(533,5)" shape-rendering="crispEdges"><rect x="0" y="0" width="1" height="15" fill="#6b6b6b"/><rect x="1" y="0" width="1" height="16" fill="#fff"/></g>
<g transform="translate(541,5)"><path d="M0.500 0.500h12.500l-5 6v8.500h-2.500v-8.500z" fill="#d8d8d8" stroke="#4a4a4a" stroke-width="1" stroke-linejoin="round"/><path d="M2 2h9.500" stroke="#f8f8f8" stroke-width="1.200"/><path d="M6.300 7v7.500" stroke="#8a8a8a" stroke-width="1"/><g transform="translate(7,8)"><g transform="rotate(-45 4 4)"><rect x="0" y="2" width="5" height="4.500" fill="#fff" stroke="#b0b0b0" stroke-width=".500"/><rect x="5" y="2" width="4.500" height="4.500" fill="#f01010"/></g></g></g>
<g transform="translate(562,5)" shape-rendering="crispEdges"><rect x="0" y="0" width="1" height="15" fill="#6b6b6b"/><rect x="1" y="0" width="1" height="16" fill="#fff"/></g>
<g transform="translate(569,5)" shape-rendering="crispEdges"><rect x="1" y="1" width="14" height="14" fill="#585858"/><rect x="2" y="2" width="12" height="12" fill="#fff"/><rect x="2" y="2" width="5" height="12" fill="#d4d4d4"/><rect x="11" y="2" width="3" height="12" fill="#d4d4d4"/><rect x="0" y="1" width="11" height="9" fill="#c8a83c"/><rect x="1" y="2" width="9" height="7" fill="#f0dc78"/><rect x="1" y="8" width="9" height="1" fill="#fdf6c8"/><circle cx="3.500" cy="1.500" r="1.700" fill="#f02030" shape-rendering="auto"/><path d="M4 3l1.500 1.500" stroke="#777" shape-rendering="auto"/></g>
<path d="M591 11h6l-3 3.500z" fill="#000"/>
<g transform="translate(602,5)" shape-rendering="crispEdges"><rect x="0" y="0" width="1" height="15" fill="#6b6b6b"/><rect x="1" y="0" width="1" height="16" fill="#fff"/></g>
<g transform="translate(610,6)" shape-rendering="crispEdges"><rect x="0" y="0" width="14" height="14" fill="#585858"/><rect x="1" y="2" width="12" height="10" fill="#fff"/><rect x="1" y="2" width="12" height="2" fill="#d0d0d0"/><rect x="1" y="10" width="12" height="2" fill="#d0d0d0"/><rect x="2" y="5" width="1" height="1" fill="#444"/><rect x="2" y="8" width="1" height="1" fill="#444"/><rect x="4" y="5" width="1" height="1" fill="#444"/><rect x="4" y="8" width="1" height="1" fill="#444"/><rect x="6" y="5" width="1" height="1" fill="#444"/><rect x="6" y="8" width="1" height="1" fill="#444"/><rect x="8" y="5" width="1" height="1" fill="#444"/><rect x="8" y="8" width="1" height="1" fill="#444"/><path d="M10.500 3v8.500l4.500-4.200z" fill="#45c8ff" stroke="#2040d0" shape-rendering="auto"/></g>
<g transform="translate(633,6)" shape-rendering="crispEdges"><rect x="0" y="0" width="14" height="14" fill="#585858"/><rect x="1" y="2" width="12" height="10" fill="#fff"/><rect x="1" y="2" width="12" height="2" fill="#d0d0d0"/><rect x="1" y="10" width="12" height="2" fill="#d0d0d0"/><rect x="0" y="5" width="10" height="4" fill="#585858"/><path d="M14.500 3v8.500l-4-4.200z" fill="#45c8ff" stroke="#2040d0" shape-rendering="auto"/></g>
<g transform="translate(654,5)" shape-rendering="crispEdges"><rect x="0" y="0" width="1" height="15" fill="#6b6b6b"/><rect x="1" y="0" width="1" height="16" fill="#fff"/></g>
<g transform="translate(661,5)" shape-rendering="crispEdges"><rect x="1" y="0" width="15" height="15" fill="#787c80"/><rect x="2" y="1" width="13" height="13" fill="#fff"/><rect x="3" y="3" width="3" height="2" fill="#e0e0e0"/><rect x="3" y="6" width="3" height="2" fill="#e0e0e0"/><rect x="3" y="9" width="3" height="2" fill="#e0e0e0"/><rect x="3" y="11" width="3" height="2" fill="#e0e0e0"/><rect x="7" y="3" width="3" height="2" fill="#e0e0e0"/><rect x="7" y="6" width="3" height="2" fill="#e0e0e0"/><rect x="7" y="9" width="3" height="2" fill="#e0e0e0"/><rect x="7" y="11" width="3" height="2" fill="#e0e0e0"/><rect x="11" y="3" width="3" height="2" fill="#e0e0e0"/><rect x="11" y="6" width="3" height="2" fill="#e0e0e0"/><rect x="11" y="9" width="3" height="2" fill="#e0e0e0"/><rect x="11" y="11" width="3" height="2" fill="#e0e0e0"/><path d="M13 5.500h-5.500q-3 0-3.500 4.500" fill="none" stroke="#12a81e" stroke-width="2.200" shape-rendering="auto"/><path d="M0.500 9.500h6.500l-3.300 5z" fill="#12a81e" stroke="#0a7a12" stroke-width=".600" shape-rendering="auto"/></g>
<g transform="translate(684,5)" shape-rendering="crispEdges"><rect x="3" y="9" width="9" height="6" fill="#787c80"/><rect x="4" y="10" width="7" height="4" fill="#fff"/><rect x="5" y="11" width="2" height="2" fill="#d8d8d8"/><rect x="8" y="11" width="2" height="2" fill="#d8d8d8"/><rect x="8" y="2" width="8" height="8" fill="#909498"/><rect x="8" y="1" width="8" height="8" fill="#fff"/><rect x="9" y="2" width="6" height="2" fill="#29a9ff"/><rect x="9" y="5" width="2" height="2" fill="#d8d8d8"/><rect x="12" y="5" width="2" height="2" fill="#d8d8d8"/><rect x="15" y="2" width="1" height="8" fill="#787c80"/><rect x="9" y="9" width="7" height="1" fill="#787c80"/><path d="M7.500 1.500q-3.500 .5-3.800 5" fill="none" stroke="#12a81e" stroke-width="2.200" shape-rendering="auto"/><path d="M0.500 6h6.500l-3.300 5z" fill="#12a81e" stroke="#0a7a12" stroke-width=".600" shape-rendering="auto"/></g>
<g transform="translate(706,5)" shape-rendering="crispEdges"><rect x="0" y="0" width="1" height="15" fill="#6b6b6b"/><rect x="1" y="0" width="1" height="16" fill="#fff"/></g>
<g transform="translate(714,6)" shape-rendering="crispEdges"><rect x="0" y="0" width="4" height="14" fill="#555"/><rect x="1" y="1" width="3" height="12" fill="#d4d4d4"/><rect x="10" y="0" width="4" height="14" fill="#555"/><rect x="10" y="1" width="3" height="12" fill="#d4d4d4"/><rect x="4" y="0" width="6" height="14" fill="#eceef0" opacity="0"/><rect x="5" y="0" width="4" height="14" fill="#18b428"/><rect x="5.5" y="0" width="3" height="13" fill="#22e038"/></g>
<g transform="translate(737,6)" shape-rendering="crispEdges"><rect x="0" y="0" width="14" height="14" fill="#555"/><rect x="1" y="2" width="12" height="11" fill="#fff"/><rect x="2" y="3" width="3" height="3" fill="#d4d4d4"/><rect x="2" y="7" width="3" height="3" fill="#d4d4d4"/><rect x="2" y="10" width="3" height="3" fill="#d4d4d4"/><rect x="6" y="3" width="3" height="3" fill="#d4d4d4"/><rect x="6" y="7" width="3" height="3" fill="#d4d4d4"/><rect x="6" y="10" width="3" height="3" fill="#d4d4d4"/><rect x="10" y="3" width="3" height="3" fill="#d4d4d4"/><rect x="10" y="7" width="3" height="3" fill="#d4d4d4"/><rect x="10" y="10" width="3" height="3" fill="#d4d4d4"/><rect x="7" y="2" width="5" height="10" fill="#b89820"/><rect x="8" y="3" width="3" height="8" fill="#f0dc60"/><rect x="9" y="4" width="1" height="1" fill="#4060c0"/><rect x="9" y="6" width="1" height="1" fill="#4060c0"/><rect x="9" y="8" width="1" height="1" fill="#4060c0"/><rect x="11" y="0" width="3" height="2" fill="#eceef0"/><rect x="12" y="12" width="2" height="2" fill="#dadce1"/></g>
<g transform="translate(759,5)" shape-rendering="crispEdges"><g transform="translate(0,1)"><rect x="0" y="0" width="14" height="14" fill="#555"/><rect x="1" y="2" width="12" height="11" fill="#fff"/><rect x="2" y="3" width="3" height="3" fill="#d4d4d4"/><rect x="2" y="7" width="3" height="3" fill="#d4d4d4"/><rect x="2" y="10" width="3" height="3" fill="#d4d4d4"/><rect x="6" y="3" width="3" height="3" fill="#d4d4d4"/><rect x="6" y="7" width="3" height="3" fill="#d4d4d4"/><rect x="6" y="10" width="3" height="3" fill="#d4d4d4"/><rect x="10" y="3" width="3" height="3" fill="#d4d4d4"/><rect x="10" y="7" width="3" height="3" fill="#d4d4d4"/><rect x="10" y="10" width="3" height="3" fill="#d4d4d4"/></g><rect x="4" y="0" width="12" height="5" fill="#c8a820"/><rect x="5" y="1" width="10" height="3" fill="#f8e470"/><path d="M8 5h3l-2 2z" fill="#d8b830" shape-rendering="auto"/><rect x="7" y="2" width="1" height="1" fill="#4060c0"/><rect x="9" y="2" width="1" height="1" fill="#4060c0"/><rect x="11" y="2" width="1" height="1" fill="#4060c0"/></g>
<g transform="translate(782,6)" shape-rendering="crispEdges"><path d="M0.500 3.500h2M0.500 3.500v9h2M0.500 7.500h3" fill="none" stroke="#4a6656" stroke-width="1"/><rect x="2" y="1" width="5" height="4" rx="1" fill="#2f95f0" shape-rendering="auto"/><rect x="3" y="2" width="3" height="1" fill="#e0f4ff"/><rect x="7" y="1" width="5" height="4" rx="1" fill="#2f95f0" shape-rendering="auto"/><rect x="8" y="2" width="3" height="1" fill="#e0f4ff"/><rect x="3" y="6" width="8" height="3" fill="#555"/><rect x="4" y="7" width="6" height="1" fill="#aaa"/><path d="M14 6l-2 1.500 2 1.500z" fill="#333" shape-rendering="auto"/><rect x="2" y="10" width="5" height="4" rx="1" fill="#22a022" shape-rendering="auto"/><rect x="3" y="11" width="3" height="1" fill="#d8ffd0"/><rect x="7" y="10" width="5" height="4" rx="1" fill="#22a022" shape-rendering="auto"/><rect x="8" y="11" width="3" height="1" fill="#d8ffd0"/></g>
<g transform="translate(805,6)" shape-rendering="crispEdges"><path d="M0.500 1.500h2M0.500 1.500v11h2M0.500 6.500h2" fill="none" stroke="#4a6656" stroke-width="1"/><rect x="2" y="0" width="4" height="4" rx="1" fill="#b01818" shape-rendering="auto"/><rect x="3" y="1" width="2" height="1" fill="#ffd8d8"/><rect x="2" y="5" width="4" height="4" rx="1" fill="#2f95f0" shape-rendering="auto"/><rect x="3" y="6" width="2" height="1" fill="#e0f4ff"/><rect x="7" y="5" width="4" height="4" rx="1" fill="#2f95f0" shape-rendering="auto"/><rect x="8" y="6" width="2" height="1" fill="#e0f4ff"/><rect x="6" y="6.5" width="1" height="1" fill="#4a6656"/><rect x="2" y="10" width="4" height="4" rx="1" fill="#22a022" shape-rendering="auto"/><rect x="3" y="11" width="2" height="1" fill="#d8ffd0"/><rect x="7" y="10" width="4" height="4" rx="1" fill="#22a022" shape-rendering="auto"/><rect x="8" y="11" width="2" height="1" fill="#d8ffd0"/><rect x="12" y="10" width="4" height="4" rx="1" fill="#22a022" shape-rendering="auto"/><rect x="13" y="11" width="2" height="1" fill="#d8ffd0"/><rect x="6" y="11.5" width="1" height="1" fill="#4a6656"/><rect x="11" y="11.5" width="1" height="1" fill="#4a6656"/></g>
<g transform="translate(828,6)"><g shape-rendering="auto" fill="none" stroke="#a8aeb8"><path d="M0.500 2v11M0.500 2.500h2M0.500 7.500h2M0.500 12.500h2" /><rect x="2.500" y="0.500" width="3" height="3" rx="1" fill="#e8eaee"/><rect x="2.500" y="5.500" width="3" height="3" rx="1" fill="#e8eaee"/><rect x="2.500" y="10.500" width="3" height="3" rx="1" fill="#e8eaee"/><path d="M14 4v-1.500h-6.500l3.500 4.500-3.500 4.500h6.500v-1.500" stroke="#9aa0ac" stroke-width="1.600"/><path d="M5.500 2h2M5.500 12h2" /></g></g>
<rect x="846" y="0" width="27" height="25" fill="#f4403c"/><rect x="848" y="2" width="23" height="21" fill="#3d527e"/><rect x="849" y="3" width="21" height="20" fill="#ffa640"/><rect x="849" y="20" width="21" height="3" fill="#ffb868"/>
<g transform="translate(851,5)" shape-rendering="crispEdges"><rect x="7" y="5" width="10" height="11" fill="#fff"/><rect x="7" y="7" width="10" height="1" fill="#c4c4c4"/><rect x="7" y="9" width="10" height="1" fill="#c4c4c4"/><rect x="7" y="11" width="10" height="1" fill="#c4c4c4"/><rect x="7" y="13" width="10" height="1" fill="#c4c4c4"/><rect x="10" y="7" width="1" height="9" fill="#c4c4c4"/><rect x="13" y="7" width="1" height="9" fill="#c4c4c4"/><g shape-rendering="auto"><path d="M0.300 1.500h9.400l-3.500 5v9.500h-2.400v-9.500z" fill="#d8d8d8" stroke="#6e6e6e" stroke-width=".900"/><path d="M1.800 2.400h6.600" stroke="#fff" stroke-width="1.100"/><path d="M5.600 7v8.500" stroke="#9a9a9a" stroke-width=".800"/><ellipse cx="11.700" cy="2.700" rx="4.300" ry="2.700" fill="#fff" stroke="#2a4aa8" stroke-width="1.400"/><circle cx="11.700" cy="2.700" r="1.700" fill="#16245e"/><circle cx="11.200" cy="2.200" r=".600" fill="#fff"/></g></g>
<g transform="translate(876,6)" shape-rendering="crispEdges"><rect x="0" y="0" width="13" height="2" fill="#555"/><rect x="0" y="2" width="13" height="11" fill="#fff"/><rect x="0" y="2" width="1" height="1" fill="#555"/><rect x="12" y="2" width="1" height="1" fill="#555"/><rect x="0" y="4" width="2" height="3" fill="#111"/><rect x="11" y="4" width="2" height="3" fill="#111"/><rect x="3" y="5" width="1.5" height="1.5" fill="#111"/><rect x="5.5" y="5" width="1.5" height="1.5" fill="#111"/><rect x="8" y="5" width="1.5" height="1.5" fill="#111"/><rect x="1" y="9" width="11" height="3" rx="1" fill="#2aa0f0" stroke="#1a70d0" stroke-width=".600" shape-rendering="auto"/><rect x="0" y="13" width="13" height="1" fill="#555"/><rect x="0" y="12" width="1" height="2" fill="#555"/><rect x="12" y="12" width="1" height="2" fill="#555"/></g>
<g transform="translate(896,5)" shape-rendering="crispEdges"><rect x="0" y="0" width="1" height="15" fill="#6b6b6b"/><rect x="1" y="0" width="1" height="16" fill="#fff"/></g>
<g transform="translate(903,5)"><g transform="translate(0,0.5) scale(0.86)" shape-rendering="auto"><path d="M6.500 0h3v2.200l1.700.700 1.600-1.600 2.100 2.100-1.600 1.600.700 1.700h2.200v3h-2.200l-.700 1.700 1.600 1.600-2.100 2.100-1.600-1.600-1.700.700v2.200h-3v-2.200l-1.700-.700-1.600 1.600-2.100-2.100 1.600-1.600-.700-1.700h-2.200v-3h2.200l.700-1.700-1.600-1.600 2.100-2.100 1.600 1.600 1.700-.700z" fill="#f8f8f8" stroke="#8c8c8c" stroke-width="1.500"/><circle cx="8" cy="8" r="2.300" fill="#dfe0e6" stroke="#8c8c8c" stroke-width="1.300"/></g><path d="M1.500 10.500l2.500 3" stroke="#7a3aa0" stroke-width="1.200" shape-rendering="auto"/><g transform="translate(6.500,7)"><path d="M0.500 1.500h3l1 1h4v6h-8z" fill="#f2dc7c" stroke="#b8902c" stroke-width="1" shape-rendering="auto"/></g><rect x="11" y="8" width="2" height="1" fill="#3a7ae0"/></g>
<g transform="translate(926,5)"><g transform="translate(0,0.5) scale(0.86)" shape-rendering="auto"><path d="M6.500 0h3v2.200l1.700.700 1.600-1.600 2.100 2.100-1.600 1.600.700 1.700h2.200v3h-2.200l-.700 1.700 1.600 1.600-2.100 2.100-1.600-1.600-1.700.700v2.200h-3v-2.200l-1.700-.700-1.600 1.600-2.100-2.100 1.600-1.600-.700-1.700h-2.200v-3h2.200l.700-1.700-1.600-1.600 2.100-2.100 1.600 1.600 1.700-.700z" fill="#f8f8f8" stroke="#8c8c8c" stroke-width="1.500"/><circle cx="8" cy="8" r="2.300" fill="#dfe0e6" stroke="#8c8c8c" stroke-width="1.300"/></g><path d="M1.500 10.500l2.500 3" stroke="#7a3aa0" stroke-width="1.200"/><circle cx="10.700" cy="12.300" r="3.600" fill="#1fb42c" stroke="#128a1c" stroke-width=".600"/><path d="M8.800 12.300l1.400 1.600 2.500-3" fill="none" stroke="#fff" stroke-width="1.300"/></g>
<g transform="translate(949,5)"><path d="M0.500 0.500h11v12h-6v2.500l-5-1.500z" fill="#f4dc74" stroke="#c8982c" stroke-width="1"/><path d="M5.500 1v14" stroke="#d8a83c"/><path d="M1 1h4v13l-4-1z" fill="#f0e080"/><g transform="translate(4.5,3) scale(0.78)" shape-rendering="auto"><path d="M6.500 0h3v2.200l1.700.700 1.600-1.600 2.100 2.100-1.600 1.600.700 1.700h2.200v3h-2.200l-.700 1.700 1.600 1.600-2.100 2.100-1.600-1.600-1.700.700v2.200h-3v-2.200l-1.700-.700-1.600 1.600-2.100-2.100 1.600-1.600-.700-1.700h-2.200v-3h2.200l.700-1.700-1.600-1.600 2.100-2.100 1.600 1.600 1.700-.700z" fill="#f8f8f8" stroke="#8c8c8c" stroke-width="1.500"/><circle cx="8" cy="8" r="2.300" fill="#dfe0e6" stroke="#8c8c8c" stroke-width="1.300"/></g><path d="M6 14.500l1.500-1M11 14.500l2-1.500" stroke="#8040a0"/></g>
<g transform="translate(972,5)"><g shape-rendering="auto"><path d="M1.500 7.500v7h10M15 0.500v11h-3" fill="none" stroke="#b4bcd0" stroke-width="1"/><rect x="2.500" y="6.500" width="11" height="7" fill="#eef0f6"/><path d="M3 8h3M3 10h3M3 12h3M9 3h4M9 8h4" stroke="#c4cce0"/><g transform="translate(3,1)"><g transform="rotate(-45 4 4)"><rect x="0" y="2" width="5" height="4" fill="#f8f8fa" stroke="#c0c4d0" stroke-width=".500"/><rect x="5" y="2" width="4" height="4" fill="#b8bcc8"/></g></g><circle cx="11.500" cy="13" r="2.800" fill="#d8dce4" stroke="#a0a8b8"/><path d="M10 13l1.200 1.200 2-2.400" fill="none" stroke="#f8f8fa" stroke-width="1"/></g></g>
<g transform="translate(995,5)" shape-rendering="crispEdges"><rect x="0" y="6" width="1" height="9" fill="#666"/><rect x="0" y="14" width="16" height="1" fill="#666"/><rect x="15" y="0" width="1" height="15" fill="#666"/><rect x="8" y="0" width="8" height="1" fill="#666"/><rect x="1" y="1" width="14" height="13" fill="#fff"/><rect x="2" y="6" width="2" height="7" fill="#2a8af0"/><rect x="12" y="2" width="2" height="2" fill="#2a8af0"/><rect x="5" y="7" width="3" height="1" fill="#d8d8d8"/><rect x="5" y="9" width="3" height="1" fill="#d8d8d8"/><rect x="5" y="11" width="3" height="1" fill="#d8d8d8"/><rect x="8" y="7" width="3" height="1" fill="#d8d8d8"/><rect x="8" y="9" width="3" height="1" fill="#d8d8d8"/><rect x="8" y="11" width="3" height="1" fill="#d8d8d8"/><rect x="11" y="7" width="3" height="1" fill="#d8d8d8"/><rect x="11" y="9" width="3" height="1" fill="#d8d8d8"/><rect x="11" y="11" width="3" height="1" fill="#d8d8d8"/><g transform="translate(2,-1.500)" shape-rendering="auto"><g transform="rotate(-45 4 4)"><rect x="0" y="2" width="5" height="4.500" fill="#fff" stroke="#b0b0b0" stroke-width=".500"/><rect x="5" y="2" width="4.500" height="4.500" fill="#f01010"/></g></g></g>
<g transform="translate(1017,5)" shape-rendering="crispEdges"><rect x="0" y="0" width="1" height="15" fill="#6b6b6b"/><rect x="1" y="0" width="1" height="16" fill="#fff"/></g>
<g transform="translate(1024,5)" shape-rendering="crispEdges"><rect x="0" y="0" width="16" height="15" fill="#666"/><rect x="1" y="1" width="14" height="13" fill="#fff"/><rect x="2" y="2" width="12" height="3" fill="#f59a0c"/><rect x="2" y="2" width="3" height="11" fill="#f59a0c"/><rect x="3" y="3" width="2" height="1" fill="#ffd890"/><rect x="6" y="3" width="2" height="1" fill="#ffd890"/><rect x="9" y="3" width="2" height="1" fill="#ffd890"/><rect x="12" y="3" width="2" height="1" fill="#ffd890"/><rect x="3" y="6" width="1" height="1" fill="#ffd890"/><rect x="3" y="8" width="1" height="1" fill="#ffd890"/><rect x="3" y="10" width="1" height="1" fill="#ffd890"/><rect x="3" y="12" width="1" height="1" fill="#ffd890"/><rect x="6" y="6" width="2" height="2" fill="#e4e4e4"/><rect x="9" y="6" width="2" height="2" fill="#e4e4e4"/><rect x="12" y="6" width="2" height="2" fill="#e4e4e4"/><rect x="7" y="8" width="9" height="8" fill="#fff"/><rect x="8" y="9" width="3" height="6" fill="#f59a0c"/><rect x="12" y="9" width="3" height="6" fill="#f59a0c"/><rect x="8" y="12" width="3" height="3" fill="#ffb030"/><rect x="12" y="12" width="3" height="3" fill="#ffb030"/></g>
</svg>
<div class="leftline"></div>
<div class="grp"><span class="gt">Database Type</span><span class="sortup"></span><svg class="flt" style="left:100px;top:5px"><use href="#flt"/></svg></div>
<svg class="trash" width="18" height="21" viewBox="0 0 18 21"><use href="#trash"/></svg>
<div class="grid">
<div class="hdr"><div class="hc" style="left:1px;width:40px"><span class="ht" style="left:3px">S..</span><svg class="flt" style="left:19px;top:6px"><use href="#flt"/></svg></div><div class="hc" style="left:41px;width:191px"><span class="ht" style="left:3px">Database Title</span><span class="sortup" style="left:157px;top:7px"></span><svg class="flt" style="left:170px;top:6px"><use href="#flt"/></svg></div><div class="hc" style="left:232px;width:150px"><span class="ht" style="left:3px;letter-spacing:-.2px">Database File</span><svg class="flt" style="left:129px;top:6px"><use href="#flt"/></svg></div><div class="hc" style="left:382px;width:142px"><span class="ht" style="left:3px;letter-spacing:-.2px">Database Type</span><svg class="flt" style="left:121px;top:6px"><use href="#flt"/></svg></div><div class="hc" style="left:524px;width:200px"><span class="ht" style="left:3px;letter-spacing:.3px">Name</span><svg class="flt" style="left:179px;top:6px"><use href="#flt"/></svg></div><div class="hc" style="left:724px;width:22px"><svg class="flt" style="left:1px;top:6px"><use href="#flt"/></svg></div><div class="hc" style="left:746px;width:22px"><svg class="flt" style="left:1px;top:6px"><use href="#flt"/></svg></div><div class="hc" style="left:768px;width:150px"><span class="ht" style="left:3px;letter-spacing:.3px">Type</span><svg class="flt" style="left:129px;top:6px"><use href="#flt"/></svg></div><div class="hc hsel" style="left:918px;width:100px"><span class="ht" style="left:3px">Access</span><svg class="flt" style="left:79px;top:6px"><use href="#flta"/></svg></div><div class="hc" style="left:1018px;width:100px"><span class="ht" style="left:3px;letter-spacing:-.25px">Create Doc...</span><svg class="flt" style="left:79px;top:6px"><use href="#flt"/></svg></div><div class="hc" style="left:1118px;width:88px"><span class="ht" style="left:3px;letter-spacing:-.3px">Delete Doc...</span><svg class="flt" style="left:79px;top:6px"><use href="#flt"/></svg></div></div>
<div class="row rw" style="top:22px"><span class="c c0" style="left:19px;width:22px"></span><span class="c" style="left:41px;width:190px"><span class="t">Application Library (8)</span></span><span class="c" style="left:232px;width:149px"><span class="t">dblib4.ntf</span></span><span class="c" style="left:382px;width:141px"><svg class="ic" style="left:2px" width="17" height="17" viewBox="0 0 17 17"><use href="#tpl"/></svg><span class="t" style="left:20px;letter-spacing:.25px">Template</span></span><span class="c" style="left:524px;width:200px"><span class="t" style="letter-spacing:-0.25px">LocalDomainServers</span><span class="btn el"><i></i><i></i><i></i></span></span><span class="c" style="left:724px;width:21px"></span><span class="c" style="left:746px;width:21px"></span><span class="c" style="left:768px;width:150px"><svg class="ic" style="left:2px;top:1px" width="16" height="16" viewBox="0 0 16 16"><use href="#sg"/></svg><span class="t" style="left:19.5px;letter-spacing:-0.3px">Server Group</span><span class="btn dd"><b></b></span></span><span class="c" style="left:918px;width:100px"><span class="t" style="left:2px">6-Manager</span><span class="btn dd"><b></b></span></span><span class="c cc" style="left:1018px;width:100px;background:#eeeeee"><span class="cb cbd" style="left:44px;top:3px"><svg width="11" height="11" viewBox="0 0 11 11"><path d="M2 5.2 L4.3 8.2 L9 2.2" fill="none" stroke="#a2a2a2" stroke-width="1.900"/></svg></span></span><span class="c cc" style="left:1118px;width:88px;background:#fff"><span class="cb cbc" style="left:44px;top:3px"><svg width="11" height="11" viewBox="0 0 11 11"><path d="M2 5.2 L4.3 8.2 L9 2.2" fill="none" stroke="#3a4f8c" stroke-width="2"/></svg></span></span></div>
<div class="row rb" style="top:42px"><span class="c c0" style="left:19px;width:22px"></span><span class="c" style="left:41px;width:190px"><span class="t">Application Library (8)</span></span><span class="c" style="left:232px;width:149px"><span class="t">dblib4.ntf</span></span><span class="c" style="left:382px;width:141px"><svg class="ic" style="left:2px" width="17" height="17" viewBox="0 0 17 17"><use href="#tpl"/></svg><span class="t" style="left:20px;letter-spacing:.25px">Template</span></span><span class="c" style="left:524px;width:200px"><span class="t" style="letter-spacing:0.25px">[Anonymous]</span></span><span class="c" style="left:724px;width:21px"></span><span class="c" style="left:746px;width:21px"></span><span class="c" style="left:768px;width:150px"><span class="t" style="left:19.5px">Unspecified</span><span class="btn dd"><b></b></span></span><span class="c" style="left:918px;width:100px"><span class="t" style="left:2px">0-No Access</span><span class="btn dd"><b></b></span></span><span class="c cc" style="left:1018px;width:100px;background:#b9a69c"><span class="cb cbu" style="left:44px;top:3px"></span></span><span class="c cc" style="left:1118px;width:88px;background:#b9a69c"><span class="cb cbu" style="left:44px;top:3px"></span></span></div>
<div class="row rk" style="top:62px"><span class="c c0" style="left:19px;width:22px"></span><span class="c" style="left:41px;width:190px"><span class="t" style="letter-spacing:-0.27px">Design Synopsis</span></span><span class="c" style="left:232px;width:149px"><span class="t">dsgnsyn.ntf</span></span><span class="c" style="left:382px;width:141px"><svg class="ic" style="left:2px" width="17" height="17" viewBox="0 0 17 17"><use href="#tpl"/></svg><span class="t" style="left:20px;letter-spacing:.25px">Template</span></span><span class="c" style="left:524px;width:200px"><span class="t" style="letter-spacing:0.15px">-Default-</span></span><span class="c" style="left:724px;width:21px"></span><span class="c" style="left:746px;width:21px"></span><span class="c" style="left:768px;width:150px"><span class="wb"></span><span class="t" style="left:19.5px">Unspecified (-Default-)</span></span><span class="c" style="left:918px;width:100px"><span class="t" style="left:2px">2-Reader</span><span class="btn dd"><b></b></span></span><span class="c cc" style="left:1018px;width:100px;background:#757575"><span class="cb cbu" style="left:44px;top:3px"></span></span><span class="c cc" style="left:1118px;width:88px;background:#757575"><span class="cb cbu" style="left:44px;top:3px"></span></span></div>
<div class="row rb" style="top:82px"><span class="c c0" style="left:19px;width:22px"></span><span class="c" style="left:41px;width:190px"><span class="t" style="letter-spacing:-0.27px">Design Synopsis</span></span><span class="c" style="left:232px;width:149px"><span class="t">dsgnsyn.ntf</span></span><span class="c" style="left:382px;width:141px"><svg class="ic" style="left:2px" width="17" height="17" viewBox="0 0 17 17"><use href="#tpl"/></svg><span class="t" style="left:20px;letter-spacing:.25px">Template</span></span><span class="c" style="left:524px;width:200px"><span class="t" style="letter-spacing:-0.13px">[OtherDomainServers]</span><span class="btn el"><i></i><i></i><i></i></span></span><span class="c" style="left:724px;width:21px"></span><span class="c" style="left:746px;width:21px"></span><span class="c" style="left:768px;width:150px"><svg class="ic" style="left:2px;top:1px" width="16" height="16" viewBox="0 0 16 16"><use href="#sgd"/></svg><span class="t" style="left:19.5px;letter-spacing:-0.3px">Server Group</span><span class="btn dd"><b></b></span></span><span class="c" style="left:918px;width:100px"><span class="t" style="left:2px">0-No Access</span><span class="btn dd"><b></b></span></span><span class="c cc" style="left:1018px;width:100px;background:#b9a69c"><span class="cb cbu" style="left:44px;top:3px"></span></span><span class="c cc" style="left:1118px;width:88px;background:#b9a69c"><span class="cb cbu" style="left:44px;top:3px"></span></span></div>
<div class="row rk" style="top:102px"><span class="c c0" style="left:19px;width:22px"></span><span class="c" style="left:41px;width:190px"><span class="t" style="letter-spacing:-0.27px">Design Synopsis</span></span><span class="c" style="left:232px;width:149px"><span class="t">dsgnsyn.ntf</span></span><span class="c" style="left:382px;width:141px"><svg class="ic" style="left:2px" width="17" height="17" viewBox="0 0 17 17"><use href="#tpl"/></svg><span class="t" style="left:20px;letter-spacing:.25px">Template</span></span><span class="c" style="left:524px;width:200px"><span class="t" style="letter-spacing:-0.22px">OtherDomainServers</span><span class="btn el"><i></i><i></i><i></i></span></span><span class="c" style="left:724px;width:21px"></span><span class="c" style="left:746px;width:21px"></span><span class="c" style="left:768px;width:150px"><span class="t" style="left:19.5px">Unspecified</span><span class="btn dd"><b></b></span></span><span class="c" style="left:918px;width:100px"><span class="t" style="left:2px">2-Reader</span><span class="btn dd"><b></b></span></span><span class="c cc" style="left:1018px;width:100px;background:#757575"><span class="cb cbu" style="left:44px;top:3px"></span></span><span class="c cc" style="left:1118px;width:88px;background:#757575"><span class="cb cbu" style="left:44px;top:3px"></span></span></div>
<div class="row rs" style="top:122px"><span class="c c0" style="left:19px;width:22px"></span><span class="c" style="left:41px;width:190px"><span class="t" style="letter-spacing:-0.27px">Design Synopsis</span></span><span class="c" style="left:232px;width:149px"><span class="t">dsgnsyn.ntf</span></span><span class="c" style="left:382px;width:141px"><svg class="ic" style="left:2px" width="17" height="17" viewBox="0 0 17 17"><use href="#tpl"/></svg><span class="t" style="left:20px;letter-spacing:.25px">Template</span></span><span class="c" style="left:524px;width:200px"><span class="t">Acme01/ACME</span></span><span class="c" style="left:724px;width:21px"><span class="kbg"></span><svg class="ic" style="left:2px;top:1px" width="17" height="15" viewBox="0 0 17 15"><use href="#key"/></svg></span><span class="c" style="left:746px;width:21px"></span><span class="c" style="left:768px;width:150px"><svg class="ic" style="left:2px;top:1px" width="16" height="16" viewBox="0 0 16 16"><use href="#sv"/></svg><span class="t" style="left:19.5px;letter-spacing:-0.5px">Server</span><span class="btn dd"><b></b></span></span><span class="c" style="left:918px;width:100px"><span class="t" style="left:2px">6-Manager</span><span class="btn dd"><b></b></span></span><span class="c cc" style="left:1018px;width:100px;background:#a6d2ff"><span class="cb cbd" style="left:44px;top:3px"><svg width="11" height="11" viewBox="0 0 11 11"><path d="M2 5.2 L4.3 8.2 L9 2.2" fill="none" stroke="#a2a2a2" stroke-width="1.900"/></svg></span></span><span class="c cc" style="left:1118px;width:88px;background:#3399ff"><span class="cb cbc" style="left:44px;top:3px"><svg width="11" height="11" viewBox="0 0 11 11"><path d="M2 5.2 L4.3 8.2 L9 2.2" fill="none" stroke="#3a4f8c" stroke-width="2"/></svg></span></span></div>
<div class="row rw" style="top:142px"><span class="c c0" style="left:19px;width:22px"></span><span class="c" style="left:41px;width:190px"><span class="t" style="letter-spacing:-0.27px">Design Synopsis</span></span><span class="c" style="left:232px;width:149px"><span class="t">dsgnsyn.ntf</span></span><span class="c" style="left:382px;width:141px"><svg class="ic" style="left:2px" width="17" height="17" viewBox="0 0 17 17"><use href="#tpl"/></svg><span class="t" style="left:20px;letter-spacing:.25px">Template</span></span><span class="c" style="left:524px;width:200px"><span class="t">Acme_Development</span><span class="btn el"><i></i><i></i><i></i></span></span><span class="c" style="left:724px;width:21px"></span><span class="c" style="left:746px;width:21px"></span><span class="c" style="left:768px;width:150px"><svg class="ic" style="left:2px;top:1px" width="16" height="16" viewBox="0 0 16 16"><use href="#pg"/></svg><span class="t" style="left:19.5px;letter-spacing:-0.2px">Person Group</span><span class="btn dd"><b></b></span></span><span class="c" style="left:918px;width:100px"><span class="t" style="left:2px">6-Manager</span><span class="btn dd"><b></b></span></span><span class="c cc" style="left:1018px;width:100px;background:#eeeeee"><span class="cb cbd" style="left:44px;top:3px"><svg width="11" height="11" viewBox="0 0 11 11"><path d="M2 5.2 L4.3 8.2 L9 2.2" fill="none" stroke="#a2a2a2" stroke-width="1.900"/></svg></span></span><span class="c cc" style="left:1118px;width:88px;background:#fff"><span class="cb cbc" style="left:44px;top:3px"><svg width="11" height="11" viewBox="0 0 11 11"><path d="M2 5.2 L4.3 8.2 L9 2.2" fill="none" stroke="#3a4f8c" stroke-width="2"/></svg></span></span></div>
<div class="row rb" style="top:162px"><span class="c c0" style="left:19px;width:22px"></span><span class="c" style="left:41px;width:190px"><span class="t" style="letter-spacing:-0.27px">Design Synopsis</span></span><span class="c" style="left:232px;width:149px"><span class="t">dsgnsyn.ntf</span></span><span class="c" style="left:382px;width:141px"><svg class="ic" style="left:2px" width="17" height="17" viewBox="0 0 17 17"><use href="#tpl"/></svg><span class="t" style="left:20px;letter-spacing:.25px">Template</span></span><span class="c" style="left:524px;width:200px"><span class="t" style="letter-spacing:0.2px">Anonymous</span></span><span class="c" style="left:724px;width:21px"></span><span class="c" style="left:746px;width:21px"></span><span class="c" style="left:768px;width:150px"><span class="t" style="left:19.5px">Unspecified</span><span class="btn dd"><b></b></span></span><span class="c" style="left:918px;width:100px"><span class="t" style="left:2px">0-No Access</span><span class="btn dd"><b></b></span></span><span class="c cc" style="left:1018px;width:100px;background:#d9d1c4"><span class="cb cbu" style="left:44px;top:3px"></span></span><span class="c cc" style="left:1118px;width:88px;background:#d9d1c4"><span class="cb cbu" style="left:44px;top:3px"></span></span></div>
<div class="row rw" style="top:182px"><span class="c c0" style="left:19px;width:22px"></span><span class="c" style="left:41px;width:190px"><span class="t" style="letter-spacing:-0.27px">Design Synopsis</span></span><span class="c" style="left:232px;width:149px"><span class="t">dsgnsyn.ntf</span></span><span class="c" style="left:382px;width:141px"><svg class="ic" style="left:2px" width="17" height="17" viewBox="0 0 17 17"><use href="#tpl"/></svg><span class="t" style="left:20px;letter-spacing:.25px">Template</span></span><span class="c" style="left:524px;width:200px"><span class="t" style="letter-spacing:-0.1px">Acme_Administrators</span><span class="btn el"><i></i><i></i><i></i></span></span><span class="c" style="left:724px;width:21px"></span><span class="c" style="left:746px;width:21px"></span><span class="c" style="left:768px;width:150px"><svg class="ic" style="left:2px;top:1px" width="16" height="16" viewBox="0 0 16 16"><use href="#pg"/></svg><span class="t" style="left:19.5px;letter-spacing:-0.2px">Person Group</span><span class="btn dd"><b></b></span></span><span class="c" style="left:918px;width:100px"><span class="t" style="left:2px">6-Manager</span><span class="btn dd"><b></b></span></span><span class="c cc" style="left:1018px;width:100px;background:#eeeeee"><span class="cb cbd" style="left:44px;top:3px"><svg width="11" height="11" viewBox="0 0 11 11"><path d="M2 5.2 L4.3 8.2 L9 2.2" fill="none" stroke="#a2a2a2" stroke-width="1.900"/></svg></span></span><span class="c cc" style="left:1118px;width:88px;background:#fff"><span class="cb cbw" style="left:44px;top:3px"></span></span></div>
<div class="row rw" style="top:202px"><span class="c c0" style="left:19px;width:22px"></span><span class="c" style="left:41px;width:190px"><span class="t" style="letter-spacing:-0.27px">Design Synopsis</span></span><span class="c" style="left:232px;width:149px"><span class="t">dsgnsyn.ntf</span></span><span class="c" style="left:382px;width:141px"><svg class="ic" style="left:2px" width="17" height="17" viewBox="0 0 17 17"><use href="#tpl"/></svg><span class="t" style="left:20px;letter-spacing:.25px">Template</span></span><span class="c" style="left:524px;width:200px"><span class="t" style="letter-spacing:-0.25px">[LocalDomainServers]</span><span class="btn el"><i></i><i></i><i></i></span></span><span class="c" style="left:724px;width:21px"></span><span class="c" style="left:746px;width:21px"></span><span class="c" style="left:768px;width:150px"><svg class="ic" style="left:2px;top:1px" width="16" height="16" viewBox="0 0 16 16"><use href="#sg"/></svg><span class="t" style="left:19.5px;letter-spacing:-0.3px">Server Group</span><span class="btn dd"><b></b></span></span><span class="c" style="left:918px;width:100px"><span class="t" style="left:2px">6-Manager</span><span class="btn dd"><b></b></span></span><span class="c cc" style="left:1018px;width:100px;background:#eeeeee"><span class="cb cbd" style="left:44px;top:3px"><svg width="11" height="11" viewBox="0 0 11 11"><path d="M2 5.2 L4.3 8.2 L9 2.2" fill="none" stroke="#a2a2a2" stroke-width="1.900"/></svg></span></span><span class="c cc" style="left:1118px;width:88px;background:#fff"><span class="cb cbc" style="left:44px;top:3px"><svg width="11" height="11" viewBox="0 0 11 11"><path d="M2 5.2 L4.3 8.2 L9 2.2" fill="none" stroke="#3a4f8c" stroke-width="2"/></svg></span></span></div>
<div class="row rk" style="top:222px"><span class="c c0" style="left:19px;width:22px"></span><span class="c" style="left:41px;width:190px"><span class="t" style="letter-spacing:-0.27px">Design Synopsis</span></span><span class="c" style="left:232px;width:149px"><span class="t">dsgnsyn.ntf</span></span><span class="c" style="left:382px;width:141px"><svg class="ic" style="left:2px" width="17" height="17" viewBox="0 0 17 17"><use href="#tpl"/></svg><span class="t" style="left:20px;letter-spacing:.25px">Template</span></span><span class="c" style="left:524px;width:200px"><span class="t" style="letter-spacing:0.15px">[-Default-]</span></span><span class="c" style="left:724px;width:21px"></span><span class="c" style="left:746px;width:21px"></span><span class="c" style="left:768px;width:150px"><span class="wb"></span><span class="t" style="left:19.5px">Unspecified (-Default-)</span></span><span class="c" style="left:918px;width:100px"><span class="t" style="left:2px">2-Reader</span><span class="btn dd"><b></b></span></span><span class="c cc" style="left:1018px;width:100px;background:#757575"><span class="cb cbu" style="left:44px;top:3px"></span></span><span class="c cc" style="left:1118px;width:88px;background:#757575"><span class="cb cbu" style="left:44px;top:3px"></span></span></div>
<div class="row rw" style="top:242px"><span class="c c0" style="left:19px;width:22px"></span><span class="c" style="left:41px;width:190px"><span class="t" style="letter-spacing:-0.27px">Design Synopsis</span></span><span class="c" style="left:232px;width:149px"><span class="t">dsgnsyn.ntf</span></span><span class="c" style="left:382px;width:141px"><svg class="ic" style="left:2px" width="17" height="17" viewBox="0 0 17 17"><use href="#tpl"/></svg><span class="t" style="left:20px;letter-spacing:.25px">Template</span></span><span class="c" style="left:524px;width:200px"><span class="t" style="letter-spacing:-0.25px">LocalDomainServers</span><span class="btn el"><i></i><i></i><i></i></span></span><span class="c" style="left:724px;width:21px"></span><span class="c" style="left:746px;width:21px"></span><span class="c" style="left:768px;width:150px"><span class="t" style="left:19.5px">Unspecified</span><span class="btn dd"><b></b></span></span><span class="c" style="left:918px;width:100px"><span class="t" style="left:2px">6-Manager</span><span class="btn dd"><b></b></span></span><span class="c cc" style="left:1018px;width:100px;background:#eeeeee"><span class="cb cbd" style="left:44px;top:3px"><svg width="11" height="11" viewBox="0 0 11 11"><path d="M2 5.2 L4.3 8.2 L9 2.2" fill="none" stroke="#a2a2a2" stroke-width="1.900"/></svg></span></span><span class="c cc" style="left:1118px;width:88px;background:#fff"><span class="cb cbc" style="left:44px;top:3px"><svg width="11" height="11" viewBox="0 0 11 11"><path d="M2 5.2 L4.3 8.2 L9 2.2" fill="none" stroke="#3a4f8c" stroke-width="2"/></svg></span></span></div>
<div class="row rk" style="top:262px"><span class="c c0" style="left:19px;width:22px"></span><span class="c" style="left:41px;width:190px"><span class="t" style="letter-spacing:-0.125px">Discussion - Notes &amp; Web (8.5.3)</span></span><span class="c" style="left:232px;width:149px"><span class="t">discussion8.ntf</span></span><span class="c" style="left:382px;width:141px"><svg class="ic" style="left:2px" width="17" height="17" viewBox="0 0 17 17"><use href="#tpl"/></svg><span class="t" style="left:20px;letter-spacing:.25px">Template</span></span><span class="c" style="left:524px;width:200px"><span class="t" style="letter-spacing:0.15px">-Default-</span></span><span class="c" style="left:724px;width:21px"></span><span class="c" style="left:746px;width:21px"></span><span class="c" style="left:768px;width:150px"><span class="wb"></span><span class="t" style="left:19.5px">Unspecified (-Default-)</span></span><span class="c" style="left:918px;width:100px"><span class="t" style="left:2px">2-Reader</span><span class="btn dd"><b></b></span></span><span class="c cc" style="left:1018px;width:100px;background:#b3b7ba"><span class="cb cbu" style="left:44px;top:3px"></span></span><span class="c cc" style="left:1118px;width:88px;background:#757575"><span class="cb cbu" style="left:44px;top:3px"></span></span></div>
<div class="row rb" style="top:282px"><span class="c c0" style="left:19px;width:22px"></span><span class="c" style="left:41px;width:190px"><span class="t" style="letter-spacing:-0.125px">Discussion - Notes &amp; Web (8.5.3)</span></span><span class="c" style="left:232px;width:149px"><span class="t">discussion8.ntf</span></span><span class="c" style="left:382px;width:141px"><svg class="ic" style="left:2px" width="17" height="17" viewBox="0 0 17 17"><use href="#tpl"/></svg><span class="t" style="left:20px;letter-spacing:.25px">Template</span></span><span class="c" style="left:524px;width:200px"><span class="t" style="letter-spacing:-0.13px">[OtherDomainServers]</span><span class="btn el"><i></i><i></i><i></i></span></span><span class="c" style="left:724px;width:21px"></span><span class="c" style="left:746px;width:21px"></span><span class="c" style="left:768px;width:150px"><svg class="ic" style="left:2px;top:1px" width="16" height="16" viewBox="0 0 16 16"><use href="#sgt"/></svg><span class="t" style="left:19.5px;letter-spacing:-0.3px">Server Group</span><span class="btn dd"><b></b></span></span><span class="c" style="left:918px;width:100px"><span class="t" style="left:2px">0-No Access</span><span class="btn dd"><b></b></span></span><span class="c cc" style="left:1018px;width:100px;background:#b9a69c"><span class="cb cbu" style="left:44px;top:3px"></span></span><span class="c cc" style="left:1118px;width:88px;background:#b9a69c"><span class="cb cbu" style="left:44px;top:3px"></span></span></div>
<div class="row rb" style="top:302px"><span class="c c0" style="left:19px;width:22px"></span><span class="c" style="left:41px;width:190px"><span class="t" style="letter-spacing:-0.125px">Discussion - Notes &amp; Web (8.5.3)</span></span><span class="c" style="left:232px;width:149px"><span class="t">discussion8.ntf</span></span><span class="c" style="left:382px;width:141px"><svg class="ic" style="left:2px" width="17" height="17" viewBox="0 0 17 17"><use href="#tpl"/></svg><span class="t" style="left:20px;letter-spacing:.25px">Template</span></span><span class="c" style="left:524px;width:200px"><span class="t" style="letter-spacing:-0.22px">OtherDomainServers</span><span class="btn el"><i></i><i></i><i></i></span></span><span class="c" style="left:724px;width:21px"></span><span class="c" style="left:746px;width:21px"></span><span class="c" style="left:768px;width:150px"><svg class="ic" style="left:2px;top:1px" width="16" height="16" viewBox="0 0 16 16"><use href="#sgt"/></svg><span class="t" style="left:19.5px;letter-spacing:-0.3px">Server Group</span><span class="btn dd"><b></b></span></span><span class="c" style="left:918px;width:100px"><span class="t" style="left:2px">0-No Access</span><span class="btn dd"><b></b></span></span><span class="c cc" style="left:1018px;width:100px;background:#d9d1c4"><span class="cb cbu" style="left:44px;top:3px"></span></span><span class="c cc" style="left:1118px;width:88px;background:#b9a69c"><span class="cb cbu" style="left:44px;top:3px"></span></span></div>
<div class="row rw" style="top:322px"><span class="c c0" style="left:19px;width:22px"></span><span class="c" style="left:41px;width:190px"><span class="t" style="letter-spacing:-0.125px">Discussion - Notes &amp; Web (8.5.3)</span></span><span class="c" style="left:232px;width:149px"><span class="t">discussion8.ntf</span></span><span class="c" style="left:382px;width:141px"><svg class="ic" style="left:2px" width="17" height="17" viewBox="0 0 17 17"><use href="#tpl"/></svg><span class="t" style="left:20px;letter-spacing:.25px">Template</span></span><span class="c" style="left:524px;width:200px"><span class="t">Acme01/ACME</span></span><span class="c" style="left:724px;width:21px"><svg class="ic" style="left:2px;top:1px" width="17" height="15" viewBox="0 0 17 15"><use href="#key"/></svg></span><span class="c" style="left:746px;width:21px"></span><span class="c" style="left:768px;width:150px"><svg class="ic" style="left:2px;top:1px" width="16" height="16" viewBox="0 0 16 16"><use href="#sv"/></svg><span class="t" style="left:19.5px;letter-spacing:-0.5px">Server</span><span class="btn dd"><b></b></span></span><span class="c" style="left:918px;width:100px"><span class="t" style="left:2px">6-Manager</span><span class="btn dd"><b></b></span></span><span class="c cc" style="left:1018px;width:100px;background:#eeeeee"><span class="cb cbd" style="left:44px;top:3px"><svg width="11" height="11" viewBox="0 0 11 11"><path d="M2 5.2 L4.3 8.2 L9 2.2" fill="none" stroke="#a2a2a2" stroke-width="1.900"/></svg></span></span><span class="c cc" style="left:1118px;width:88px;background:#fff"><span class="cb cbc" style="left:44px;top:3px"><svg width="11" height="11" viewBox="0 0 11 11"><path d="M2 5.2 L4.3 8.2 L9 2.2" fill="none" stroke="#3a4f8c" stroke-width="2"/></svg></span></span></div>
<div class="row rw" style="top:342px"><span class="c c0" style="left:19px;width:22px"></span><span class="c" style="left:41px;width:190px"><span class="t" style="letter-spacing:-0.125px">Discussion - Notes &amp; Web (8.5.3)</span></span><span class="c" style="left:232px;width:149px"><span class="t">discussion8.ntf</span></span><span class="c" style="left:382px;width:141px"><svg class="ic" style="left:2px" width="17" height="17" viewBox="0 0 17 17"><use href="#tpl"/></svg><span class="t" style="left:20px;letter-spacing:.25px">Template</span></span><span class="c" style="left:524px;width:200px"><span class="t">Acme02/ACME</span></span><span class="c" style="left:724px;width:21px"></span><span class="c" style="left:746px;width:21px"></span><span class="c" style="left:768px;width:150px"><svg class="ic" style="left:2px;top:1px" width="16" height="16" viewBox="0 0 16 16"><use href="#sv"/></svg><span class="t" style="left:19.5px;letter-spacing:-0.5px">Server</span><span class="btn dd"><b></b></span></span><span class="c" style="left:918px;width:100px"><span class="t" style="left:2px">6-Manager</span><span class="btn dd"><b></b></span></span><span class="c cc" style="left:1018px;width:100px;background:#eeeeee"><span class="cb cbd" style="left:44px;top:3px"><svg width="11" height="11" viewBox="0 0 11 11"><path d="M2 5.2 L4.3 8.2 L9 2.2" fill="none" stroke="#a2a2a2" stroke-width="1.900"/></svg></span></span><span class="c cc" style="left:1118px;width:88px;background:#fff"><span class="cb cbc" style="left:44px;top:3px"><svg width="11" height="11" viewBox="0 0 11 11"><path d="M2 5.2 L4.3 8.2 L9 2.2" fill="none" stroke="#3a4f8c" stroke-width="2"/></svg></span></span></div>
<div class="row rw" style="top:362px"><span class="c c0" style="left:19px;width:22px"></span><span class="c" style="left:41px;width:190px"><span class="t" style="letter-spacing:-0.125px">Discussion - Notes &amp; Web (8.5.3)</span></span><span class="c" style="left:232px;width:149px"><span class="t">discussion8.ntf</span></span><span class="c" style="left:382px;width:141px"><svg class="ic" style="left:2px" width="17" height="17" viewBox="0 0 17 17"><use href="#tpl"/></svg><span class="t" style="left:20px;letter-spacing:.25px">Template</span></span><span class="c" style="left:524px;width:200px"><span class="t">Acme_Development</span><span class="btn el"><i></i><i></i><i></i></span></span><span class="c" style="left:724px;width:21px"></span><span class="c" style="left:746px;width:21px"></span><span class="c" style="left:768px;width:150px"><svg class="ic" style="left:2px;top:1px" width="16" height="16" viewBox="0 0 16 16"><use href="#pg"/></svg><span class="t" style="left:19.5px;letter-spacing:-0.2px">Person Group</span><span class="btn dd"><b></b></span></span><span class="c" style="left:918px;width:100px"><span class="t" style="left:2px">6-Manager</span><span class="btn dd"><b></b></span></span><span class="c cc" style="left:1018px;width:100px;background:#eeeeee"><span class="cb cbd" style="left:44px;top:3px"><svg width="11" height="11" viewBox="0 0 11 11"><path d="M2 5.2 L4.3 8.2 L9 2.2" fill="none" stroke="#a2a2a2" stroke-width="1.900"/></svg></span></span><span class="c cc" style="left:1118px;width:88px;background:#fff"><span class="cb cbc" style="left:44px;top:3px"><svg width="11" height="11" viewBox="0 0 11 11"><path d="M2 5.2 L4.3 8.2 L9 2.2" fill="none" stroke="#3a4f8c" stroke-width="2"/></svg></span></span></div>
<div class="row rb" style="top:382px"><span class="c c0" style="left:19px;width:22px"></span><span class="c" style="left:41px;width:190px"><span class="t" style="letter-spacing:-0.125px">Discussion - Notes &amp; Web (8.5.3)</span></span><span class="c" style="left:232px;width:149px"><span class="t">discussion8.ntf</span></span><span class="c" style="left:382px;width:141px"><svg class="ic" style="left:2px" width="17" height="17" viewBox="0 0 17 17"><use href="#tpl"/></svg><span class="t" style="left:20px;letter-spacing:.25px">Template</span></span><span class="c" style="left:524px;width:200px"><span class="t" style="letter-spacing:0.2px">Anonymous</span></span><span class="c" style="left:724px;width:21px"></span><span class="c" style="left:746px;width:21px"></span><span class="c" style="left:768px;width:150px"><span class="t" style="left:19.5px">Unspecified</span><span class="btn dd"><b></b></span></span><span class="c" style="left:918px;width:100px"><span class="t" style="left:2px">0-No Access</span><span class="btn dd"><b></b></span></span><span class="c cc" style="left:1018px;width:100px;background:#d9d1c4"><span class="cb cbu" style="left:44px;top:3px"></span></span><span class="c cc" style="left:1118px;width:88px;background:#b9a69c"><span class="cb cbu" style="left:44px;top:3px"></span></span></div>
<div class="row rw" style="top:402px"><span class="c c0" style="left:19px;width:22px"></span><span class="c" style="left:41px;width:190px"><span class="t" style="letter-spacing:-0.125px">Discussion - Notes &amp; Web (8.5.3)</span></span><span class="c" style="left:232px;width:149px"><span class="t">discussion8.ntf</span></span><span class="c" style="left:382px;width:141px"><svg class="ic" style="left:2px" width="17" height="17" viewBox="0 0 17 17"><use href="#tpl"/></svg><span class="t" style="left:20px;letter-spacing:.25px">Template</span></span><span class="c" style="left:524px;width:200px"><span class="t" style="letter-spacing:-0.1px">Acme_Administrators</span><span class="btn el"><i></i><i></i><i></i></span></span><span class="c" style="left:724px;width:21px"></span><span class="c" style="left:746px;width:21px"></span><span class="c" style="left:768px;width:150px"><svg class="ic" style="left:2px;top:1px" width="16" height="16" viewBox="0 0 16 16"><use href="#pg"/></svg><span class="t" style="left:19.5px;letter-spacing:-0.2px">Person Group</span><span class="btn dd"><b></b></span></span><span class="c" style="left:918px;width:100px"><span class="t" style="left:2px">6-Manager</span><span class="btn dd"><b></b></span></span><span class="c cc" style="left:1018px;width:100px;background:#eeeeee"><span class="cb cbd" style="left:44px;top:3px"><svg width="11" height="11" viewBox="0 0 11 11"><path d="M2 5.2 L4.3 8.2 L9 2.2" fill="none" stroke="#a2a2a2" stroke-width="1.900"/></svg></span></span><span class="c cc" style="left:1118px;width:88px;background:#fff"><span class="cb cbc" style="left:44px;top:3px"><svg width="11" height="11" viewBox="0 0 11 11"><path d="M2 5.2 L4.3 8.2 L9 2.2" fill="none" stroke="#3a4f8c" stroke-width="2"/></svg></span></span></div>
<div class="row rw" style="top:422px"><span class="c c0" style="left:19px;width:22px"></span><span class="c" style="left:41px;width:190px"><span class="t" style="letter-spacing:-0.125px">Discussion - Notes &amp; Web (8.5.3)</span></span><span class="c" style="left:232px;width:149px"><span class="t">discussion8.ntf</span></span><span class="c" style="left:382px;width:141px"><svg class="ic" style="left:2px" width="17" height="17" viewBox="0 0 17 17"><use href="#tpl"/></svg><span class="t" style="left:20px;letter-spacing:.25px">Template</span></span><span class="c" style="left:524px;width:200px"><span class="t" style="letter-spacing:-0.25px">[LocalDomainServers]</span><span class="btn el"><i></i><i></i><i></i></span></span><span class="c" style="left:724px;width:21px"></span><span class="c" style="left:746px;width:21px"></span><span class="c" style="left:768px;width:150px"><svg class="ic" style="left:2px;top:1px" width="16" height="16" viewBox="0 0 16 16"><use href="#sg"/></svg><span class="t" style="left:19.5px;letter-spacing:-0.3px">Server Group</span><span class="btn dd"><b></b></span></span><span class="c" style="left:918px;width:100px"><span class="t" style="left:2px">6-Manager</span><span class="btn dd"><b></b></span></span><span class="c cc" style="left:1018px;width:100px;background:#eeeeee"><span class="cb cbd" style="left:44px;top:3px"><svg width="11" height="11" viewBox="0 0 11 11"><path d="M2 5.2 L4.3 8.2 L9 2.2" fill="none" stroke="#a2a2a2" stroke-width="1.900"/></svg></span></span><span class="c cc" style="left:1118px;width:88px;background:#fff"><span class="cb cbc" style="left:44px;top:3px"><svg width="11" height="11" viewBox="0 0 11 11"><path d="M2 5.2 L4.3 8.2 L9 2.2" fill="none" stroke="#3a4f8c" stroke-width="2"/></svg></span></span></div>
<div class="row rw" style="top:442px"><span class="c c0" style="left:19px;width:22px"></span><span class="c" style="left:41px;width:190px"><span class="t" style="letter-spacing:-0.125px">Discussion - Notes &amp; Web (8.5.3)</span></span><span class="c" style="left:232px;width:149px"><span class="t">discussion8.ntf</span></span><span class="c" style="left:382px;width:141px"><svg class="ic" style="left:2px" width="17" height="17" viewBox="0 0 17 17"><use href="#tpl"/></svg><span class="t" style="left:20px;letter-spacing:.25px">Template</span></span><span class="c" style="left:524px;width:200px"><span class="t" style="letter-spacing:-0.25px">LocalDomainServers</span><span class="btn el"><i></i><i></i><i></i></span></span><span class="c" style="left:724px;width:21px"></span><span class="c" style="left:746px;width:21px"></span><span class="c" style="left:768px;width:150px"><svg class="ic" style="left:2px;top:1px" width="16" height="16" viewBox="0 0 16 16"><use href="#pg"/></svg><span class="t" style="left:19.5px;letter-spacing:-0.2px">Person Group</span><span class="btn dd"><b></b></span></span><span class="c" style="left:918px;width:100px"><span class="t" style="left:2px">6-Manager</span><span class="btn dd"><b></b></span></span><span class="c cc" style="left:1018px;width:100px;background:#eeeeee"><span class="cb cbd" style="left:44px;top:3px"><svg width="11" height="11" viewBox="0 0 11 11"><path d="M2 5.2 L4.3 8.2 L9 2.2" fill="none" stroke="#a2a2a2" stroke-width="1.900"/></svg></span></span><span class="c cc" style="left:1118px;width:88px;background:#fff"><span class="cb cbc" style="left:44px;top:3px"><svg width="11" height="11" viewBox="0 0 11 11"><path d="M2 5.2 L4.3 8.2 L9 2.2" fill="none" stroke="#3a4f8c" stroke-width="2"/></svg></span></span></div>
</div>
<svg class="ov" width="1233" height="552" viewBox="0 0 1233 552" style="left:0;top:0;pointer-events:none">
<g opacity=".28" transform="translate(1.500,2.500)"><path d="M316 110.2V458.3" stroke="#1a0a08" stroke-width="1.8" fill="none"/><path d="M316 111H337" stroke="#1a0a08" stroke-width="1.8" fill="none"/><path d="M342 111l-6 -3.2v6.4z" fill="#1a0a08"/><path d="M316 153.5H339" stroke="#1a0a08" stroke-width="1.8" fill="none"/><path d="M344 153.5l-6 -3.2v6.4z" fill="#1a0a08"/><path d="M316 235H337" stroke="#1a0a08" stroke-width="1.8" fill="none"/><path d="M342 235l-6 -3.2v6.4z" fill="#1a0a08"/><path d="M316 353H337" stroke="#1a0a08" stroke-width="1.8" fill="none"/><path d="M342 353l-6 -3.2v6.4z" fill="#1a0a08"/><path d="M316 376H337" stroke="#1a0a08" stroke-width="1.8" fill="none"/><path d="M342 376l-6 -3.2v6.4z" fill="#1a0a08"/><path d="M316 457.5H338" stroke="#1a0a08" stroke-width="1.8" fill="none"/><path d="M343 457.5l-6 -3.2v6.4z" fill="#1a0a08"/></g>
<g opacity=".18" transform="translate(-2,1.500)"><path d="M178 130V336.8" stroke="#404050" stroke-width="1.8" fill="none"/><path d="M178 130.7H193" stroke="#404050" stroke-width="1.8" fill="none"/><path d="M198 130.7l-6 -3.2v6.4z" fill="#404050"/><path d="M178 173H195" stroke="#404050" stroke-width="1.8" fill="none"/><path d="M200 173l-6 -3.2v6.4z" fill="#404050"/><path d="M178 291.7H194" stroke="#404050" stroke-width="1.8" fill="none"/><path d="M199 291.7l-6 -3.2v6.4z" fill="#404050"/><path d="M178 336H201" stroke="#404050" stroke-width="1.8" fill="none"/><path d="M206 336l-6 -3.2v6.4z" fill="#404050"/></g>
<path d="M316 110.2V458.3" stroke="#f64545" stroke-width="1.7" fill="none"/><path d="M316 111H337" stroke="#f64545" stroke-width="1.7" fill="none"/><path d="M342 111l-6 -3.2v6.4z" fill="#f64545"/><path d="M316 153.5H339" stroke="#f64545" stroke-width="1.7" fill="none"/><path d="M344 153.5l-6 -3.2v6.4z" fill="#f64545"/><path d="M316 235H337" stroke="#f64545" stroke-width="1.7" fill="none"/><path d="M342 235l-6 -3.2v6.4z" fill="#f64545"/><path d="M316 353H337" stroke="#f64545" stroke-width="1.7" fill="none"/><path d="M342 353l-6 -3.2v6.4z" fill="#f64545"/><path d="M316 376H337" stroke="#f64545" stroke-width="1.7" fill="none"/><path d="M342 376l-6 -3.2v6.4z" fill="#f64545"/><path d="M316 457.5H338" stroke="#f64545" stroke-width="1.7" fill="none"/><path d="M343 457.5l-6 -3.2v6.4z" fill="#f64545"/>
<path d="M272 452.300H316" stroke="#f64545" stroke-width="1.200"/>
<path d="M178 129.9V336.8" stroke="#fbab09" stroke-width="1.9" fill="none"/><path d="M178 130.7H193" stroke="#fbab09" stroke-width="1.9" fill="none"/><path d="M198 130.7l-6 -3.2v6.4z" fill="#fbab09"/><path d="M178 173H195" stroke="#fbab09" stroke-width="1.9" fill="none"/><path d="M200 173l-6 -3.2v6.4z" fill="#fbab09"/><path d="M178 291.7H194" stroke="#fbab09" stroke-width="1.9" fill="none"/><path d="M199 291.7l-6 -3.2v6.4z" fill="#fbab09"/><path d="M178 336H201" stroke="#fbab09" stroke-width="1.9" fill="none"/><path d="M206 336l-6 -3.2v6.4z" fill="#fbab09"/>
</svg>
<style>.lbl{text-shadow:4.20px 0.00px 0.600px #fff,3.99px 1.30px 0.600px #fff,3.40px 2.47px 0.600px #fff,2.47px 3.40px 0.600px #fff,1.30px 3.99px 0.600px #fff,0.00px 4.20px 0.600px #fff,-1.30px 3.99px 0.600px #fff,-2.47px 3.40px 0.600px #fff,-3.40px 2.47px 0.600px #fff,-3.99px 1.30px 0.600px #fff,-4.20px 0.00px 0.600px #fff,-3.99px -1.30px 0.600px #fff,-3.40px -2.47px 0.600px #fff,-2.47px -3.40px 0.600px #fff,-1.30px -3.99px 0.600px #fff,-0.00px -4.20px 0.600px #fff,1.30px -3.99px 0.600px #fff,2.47px -3.40px 0.600px #fff,3.40px -2.47px 0.600px #fff,3.99px -1.30px 0.600px #fff,3.00px 0.00px 0.600px #fff,2.70px 1.30px 0.600px #fff,1.87px 2.35px 0.600px #fff,0.67px 2.92px 0.600px #fff,-0.67px 2.92px 0.600px #fff,-1.87px 2.35px 0.600px #fff,-2.70px 1.30px 0.600px #fff,-3.00px 0.00px 0.600px #fff,-2.70px -1.30px 0.600px #fff,-1.87px -2.35px 0.600px #fff,-0.67px -2.92px 0.600px #fff,0.67px -2.92px 0.600px #fff,1.87px -2.35px 0.600px #fff,2.70px -1.30px 0.600px #fff,1.50px 0.00px 0.600px #fff,1.06px 1.06px 0.600px #fff,0.00px 1.50px 0.600px #fff,-1.06px 1.06px 0.600px #fff,-1.50px 0.00px 0.600px #fff,-1.06px -1.06px 0.600px #fff,-0.00px -1.50px 0.600px #fff,1.06px -1.06px 0.600px #fff}</style>
<div class="lblsh" style="left:51.500px;top:321.500px;font-size:16.600px;letter-spacing:-.56px">Rows filtered out</div>
<div class="lbl" style="left:51.500px;top:319.500px;font-size:16.600px;letter-spacing:-.56px;color:#f8ae2c">Rows filtered out</div>
<div class="lblsh" style="left:124.500px;top:443px;font-size:16px;letter-spacing:-.45px">Manually-hidden rows</div>
<div class="lbl" style="left:124.500px;top:441.500px;font-size:16px;letter-spacing:-.45px;color:#f54a4a">Manually-hidden rows</div>
<div class="gridbot"></div>
<div class="status"><span style="left:2px">Rows Loaded: 1645</span><span style="left:108px;letter-spacing:0">|</span><span style="left:117px">Rows Displayed: 1645</span><span style="left:235px;letter-spacing:0">|</span><span style="left:244px">Rows Selected: 1</span></div>
<div class="hs"><span class="la"></span><div class="th"><i style="left:364px"></i><i style="left:366px"></i><i style="left:368px"></i><i style="left:370px"></i></div><span class="ra"></span></div>
<div class="vs"><div class="ws"></div><span class="up"></span><div class="th"><i></i></div><span class="dn"></span></div>
<div class="corner"></div>
<div class="os"><div class="th"><i></i></div></div>
<div class="redge"></div><div class="botline"></div><div class="botline2"></div>
</body></html>
